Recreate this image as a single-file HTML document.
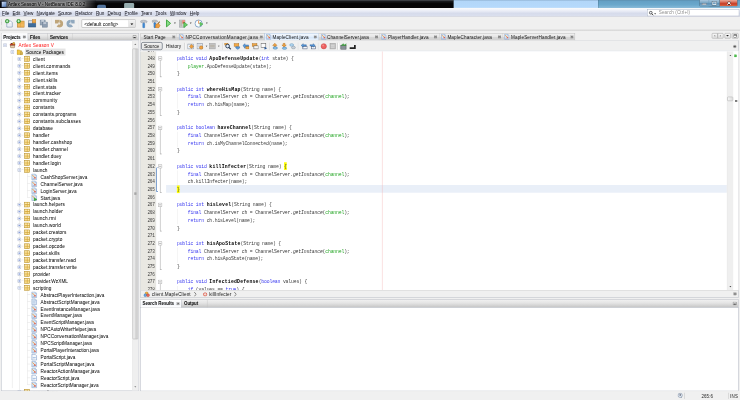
<!DOCTYPE html>
<html lang="en"><head><meta charset="utf-8"><title>Artlex Season V - NetBeans IDE 8.0.2</title>
<style>
html,body{margin:0;padding:0;background:#f0f0f0;overflow:hidden;}
body{width:740px;height:400px;position:relative;}
#w{filter:contrast(1);position:absolute;left:0;top:0;width:1920px;height:1038px;transform:scale(0.385417);transform-origin:0 0;font-family:"Liberation Sans","NanumGothic",sans-serif;font-size:12px;overflow:hidden;background:#f0f0f0;}
.a{position:absolute;box-sizing:border-box;}
.t{white-space:pre;}
.m{font-family:"Liberation Mono","DejaVu Sans Mono",monospace;}
.cl{position:absolute;left:0;height:14px;line-height:14px;white-space:pre;font-family:"Liberation Mono","DejaVu Sans Mono",monospace;font-size:12.4px;letter-spacing:-0.44px;color:#3d3d3d;}
.ln{position:absolute;height:13px;line-height:13px;font-family:"Liberation Mono","DejaVu Sans Mono",monospace;font-size:11.5px;letter-spacing:-0.8px;color:#3c3c3c;text-align:right;}
.k{color:#3c3cf0;} .f{color:#2aa82a;} .b{font-weight:bold;letter-spacing:0.56px;color:#000;} .i{font-style:italic;}
.hl{background:#ffff00;padding:5px 0 1px 0;}
</style></head>
<body><div id="w">
<div class="a " style="left:0.00px;top:0.00px;width:1920.00px;height:20.89px;background:#0a0a0c;"></div>
<div class="a " style="left:0.00px;top:0.00px;width:1176.65px;height:20.89px;background:linear-gradient(#5a5f66 0,#1c1e22 12%,#050506 45%,#060608 100%);"></div>
<div class="a " style="left:1176.65px;top:0.00px;width:374.92px;height:20.89px;background:linear-gradient(#8fb0d0 0,#b2d6f8 14%,#b5d9fb 80%,#c4e0fb 100%);"></div>
<div class="a " style="left:1551.57px;top:0.00px;width:368.43px;height:20.89px;background:linear-gradient(#5c8fb0 0,#64a0c5 18%,#6aa8cc 60%,#8abbd9 100%);"></div>
<div class="a " style="left:251.68px;top:11.68px;width:23.35px;height:9.21px;background:#6d9ad0;opacity:.75;border-radius:4px 4px 0 0;"></div>
<div class="a " style="left:321.73px;top:7.78px;width:25.95px;height:13.10px;background:#b9d6da;opacity:.8;border-radius:3px 3px 0 0;"></div>
<div class="a " style="left:7.78px;top:0.00px;width:241.30px;height:20.89px;background:linear-gradient(90deg,rgba(255,255,255,0) 0,rgba(255,255,255,.42) 6%,rgba(255,255,255,.46) 80%,rgba(255,255,255,.2) 92%,rgba(255,255,255,0) 100%);"></div>
<div class="a " style="left:7.78px;top:0.00px;width:241.30px;height:20.89px;background:linear-gradient(rgba(0,0,0,.25) 0,rgba(0,0,0,0) 30%,rgba(0,0,0,0) 75%,rgba(0,0,0,.35) 100%);"></div>
<div class="a " style="left:3.11px;top:2.59px;width:14.53px;height:16.09px;background:linear-gradient(135deg,#dfe9f6,#7f9fcf 60%,#4a6fae);border-radius:3px;border:1px solid #3d4a66;"></div>
<div class="a t " style="left:20.76px;top:5px;height:14px;line-height:14px;font-size:12px;letter-spacing:-0.059px;color:#000;text-shadow:0 0 5px rgba(255,255,255,.8),0 0 9px rgba(255,255,255,.6);-webkit-text-stroke:.15px #000;">Artlex Season V - NetBeans IDE 8.0.2</div>
<div class="a " style="left:1814.14px;top:0.00px;width:25.43px;height:16.61px;background:linear-gradient(#a9c6dc,#7aa6c4 45%,#5f90b4 55%,#79a8c8);border:1px solid #3f5a6c;border-top:0;border-radius:0 0 0 5px;"></div>
<div class="a " style="left:1839.57px;top:0.00px;width:26.98px;height:16.61px;background:linear-gradient(#a9c6dc,#7aa6c4 45%,#5f90b4 55%,#79a8c8);border:1px solid #3f5a6c;border-top:0;border-left:0;"></div>
<div class="a " style="left:1866.55px;top:0.00px;width:47.74px;height:16.61px;background:linear-gradient(#eaa898,#d4604a 45%,#c2331f 55%,#da6a48);border:1px solid #5a2a22;border-top:0;border-left:0;border-radius:0 0 5px 0;"></div>
<div class="a " style="left:1821.41px;top:8.82px;width:11.42px;height:4.15px;background:#f4f6f8;border:1px solid #4a5a6a;"></div>
<div class="a " style="left:1847.87px;top:4.15px;width:11.42px;height:8.82px;background:#6f9dbe;border:2px solid #f4f6f8;outline:1px solid #4a5a6a;"></div>
<svg class="a" style="left:1884.71px;top:3.11px;" width="12.97" height="10.38" viewBox="0 0 10 8"><path d="M1.500 1l7 6M8.500 1l-7 6" stroke="#4a1a12" stroke-width="3.400"/><path d="M1.500 1l7 6M8.500 1l-7 6" stroke="#fff" stroke-width="2"/></svg>
<div class="a " style="left:0.00px;top:20.89px;width:1920.00px;height:22.44px;background:linear-gradient(#ffffff 0,#f2f4fa 18%,#e1e5f2 50%,#d6dbeb 62%,#dadfee 100%);border-bottom:1px solid #b8bccb;"></div>
<div class="a t " style="left:5.19px;top:28px;height:14px;line-height:14px;font-size:12px;letter-spacing:-0.101px;transform:scaleY(1.08);transform-origin:0 11px;color:#101018;"><u>F</u>ile</div>
<div class="a t " style="left:32.69px;top:28px;height:14px;line-height:14px;font-size:12px;letter-spacing:-0.173px;transform:scaleY(1.08);transform-origin:0 11px;color:#101018;"><u>E</u>dit</div>
<div class="a t " style="left:61.23px;top:28px;height:14px;line-height:14px;font-size:12px;letter-spacing:-0.222px;transform:scaleY(1.08);transform-origin:0 11px;color:#101018;"><u>V</u>iew</div>
<div class="a t " style="left:94.96px;top:28px;height:14px;line-height:14px;font-size:12px;letter-spacing:-0.017px;transform:scaleY(1.08);transform-origin:0 11px;color:#101018;"><u>N</u>avigate</div>
<div class="a t " style="left:150.49px;top:28px;height:14px;line-height:14px;font-size:12px;letter-spacing:-0.368px;transform:scaleY(1.08);transform-origin:0 11px;color:#101018;"><u>S</u>ource</div>
<div class="a t " style="left:195.11px;top:28px;height:14px;line-height:14px;font-size:12px;letter-spacing:-0.090px;transform:scaleY(1.08);transform-origin:0 11px;color:#101018;"><u>R</u>efactor</div>
<div class="a t " style="left:249.08px;top:28px;height:14px;line-height:14px;font-size:12px;letter-spacing:-0.247px;transform:scaleY(1.08);transform-origin:0 11px;color:#101018;"><u>R</u>un</div>
<div class="a t " style="left:278.66px;top:28px;height:14px;line-height:14px;font-size:12px;letter-spacing:0.089px;transform:scaleY(1.08);transform-origin:0 11px;color:#101018;"><u>D</u>ebug</div>
<div class="a t " style="left:323.29px;top:28px;height:14px;line-height:14px;font-size:12px;letter-spacing:0.033px;transform:scaleY(1.08);transform-origin:0 11px;color:#101018;"><u>P</u>rofile</div>
<div class="a t " style="left:365.84px;top:28px;height:14px;line-height:14px;font-size:12px;letter-spacing:-0.071px;transform:scaleY(1.08);transform-origin:0 11px;color:#101018;"><u>T</u>eam</div>
<div class="a t " style="left:403.20px;top:28px;height:14px;line-height:14px;font-size:12px;letter-spacing:0.313px;transform:scaleY(1.08);transform-origin:0 11px;color:#101018;"><u>T</u>ools</div>
<div class="a t " style="left:441.08px;top:28px;height:14px;line-height:14px;font-size:12px;letter-spacing:-0.023px;transform:scaleY(1.08);transform-origin:0 11px;color:#101018;"><u>W</u>indow</div>
<div class="a t " style="left:492.45px;top:28px;height:14px;line-height:14px;font-size:12px;letter-spacing:0.055px;transform:scaleY(1.08);transform-origin:0 11px;color:#101018;"><u>H</u>elp</div>
<div class="a " style="left:1678.70px;top:23.87px;width:239.48px;height:18.16px;background:#fff;border:1px solid #8e9bb5;"></div>
<div class="a t " style="left:1709.32px;top:25px;height:14px;line-height:14px;font-size:12px;letter-spacing:0.207px;transform:scaleY(1.1);transform-origin:0 11px;color:#8f8f8f;">Search (Ctrl+I)</div>
<svg class="a" style="left:1683.4px;top:26.5px" width="22" height="16" viewBox="0 0 22 16"><circle cx="5.500" cy="6" r="3.600" fill="#eef2f8" stroke="#333" stroke-width="1.800"/><path d="M8 8.500l4 4" stroke="#333" stroke-width="2.400"/><path d="M14.500 7.500h4.500l-2.250 2.800z" fill="#222"/></svg>
<div class="a " style="left:0.00px;top:43.59px;width:1920.00px;height:38.40px;background:#f0f0f0;"></div>
<div class="a " style="left:0.00px;top:76.28px;width:1920.00px;height:4.67px;background:linear-gradient(#e2e2e2,#d6d6d6);"></div>
<div class="a " style="left:0.00px;top:80.95px;width:1920.00px;height:4.67px;background:#f1f1f1;"></div>
<div class="a " style="left:3.11px;top:49.82px;width:1.82px;height:1.30px;background:#b0b0b0;"></div>
<div class="a " style="left:3.11px;top:52.67px;width:1.82px;height:1.30px;background:#b0b0b0;"></div>
<div class="a " style="left:3.11px;top:55.52px;width:1.82px;height:1.30px;background:#b0b0b0;"></div>
<div class="a " style="left:3.11px;top:58.38px;width:1.82px;height:1.30px;background:#b0b0b0;"></div>
<div class="a " style="left:3.11px;top:61.23px;width:1.82px;height:1.30px;background:#b0b0b0;"></div>
<div class="a " style="left:3.11px;top:64.09px;width:1.82px;height:1.30px;background:#b0b0b0;"></div>
<div class="a " style="left:3.11px;top:66.94px;width:1.82px;height:1.30px;background:#b0b0b0;"></div>
<div class="a " style="left:3.11px;top:69.79px;width:1.82px;height:1.30px;background:#b0b0b0;"></div>
<div class="a " style="left:3.11px;top:72.65px;width:1.82px;height:1.30px;background:#b0b0b0;"></div>
<svg class="a" style="left:12.97px;top:49.30px;" width="20.76" height="23.35" viewBox="0 0 22 24"><path d="M5 5h10l5 5v12H5z" fill="#fbfcfe" stroke="#6a86a8" stroke-width="1.6"/><path d="M7 13h11M7 16h11M7 19h11" stroke="#c9d4e2" stroke-width="1.2"/><circle cx="6" cy="6" r="5.2" fill="#3aa83a" stroke="#1d7a1d" stroke-width="1"/><path d="M6 2.8v6.4M2.8 6h6.4" stroke="#eaffea" stroke-width="2"/></svg>
<svg class="a" style="left:41.51px;top:49.30px;" width="22.31" height="23.35" viewBox="0 0 22 24"><rect x="3" y="6" width="18" height="16" fill="#f2b85a" stroke="#b97a22" stroke-width="1.6"/><path d="M3 11h18M11 6v16" stroke="#d99a3c" stroke-width="1.2"/><circle cx="6" cy="6" r="5.2" fill="#3aa83a" stroke="#1d7a1d" stroke-width="1"/><path d="M6 2.8v6.4M2.8 6h6.4" stroke="#eaffea" stroke-width="2"/></svg>
<svg class="a" style="left:71.61px;top:49.30px;" width="22.83" height="23.35" viewBox="0 0 24 24"><rect x="2" y="5" width="12" height="16" fill="#dfe6ee" stroke="#5b7390" stroke-width="1.4"/><rect x="13" y="2" width="9" height="9" fill="#f0a848" stroke="#b97a22" stroke-width="1.4"/><path d="M2 12h20v10H2z" fill="#3f6d9c" stroke="#2b4f78" stroke-width="1.4"/></svg>
<svg class="a" style="left:102.23px;top:50.34px;" width="22.83" height="22.31" viewBox="0 0 24 24"><rect x="2" y="2" width="14" height="14" fill="#9aa9ba" stroke="#6f8196" stroke-width="1.4"/><rect x="8" y="8" width="14" height="14" fill="#8e9eb2" stroke="#6a7c92" stroke-width="1.4"/><rect x="11" y="8" width="8" height="5" fill="#c3ccd8"/><rect x="5" y="2" width="8" height="5" fill="#c3ccd8"/></svg>
<div class="a " style="left:132.84px;top:49.30px;width:1.30px;height:24.65px;background:#bdbdbd;"></div>
<div class="a " style="left:134.14px;top:49.30px;width:1.04px;height:24.65px;background:#fff;"></div>
<svg class="a" style="left:141.66px;top:50.34px;" width="22.31" height="21.79" viewBox="0 0 24 24"><path d="M13 5.500A7 7 0 1 1 8 17.500" fill="none" stroke="#bfa57a" stroke-width="8.500"/><rect x="0.500" y="1.500" width="12" height="10.500" fill="#bfa57a"/><rect x="9.500" y="9" width="4" height="4.500" fill="#e9e2d4"/></svg>
<svg class="a" style="left:172.28px;top:50.34px;" width="22.31" height="21.79" viewBox="0 0 24 24"><path d="M11 5.500A7 7 0 1 0 16 17.500" fill="none" stroke="#90a8be" stroke-width="8.500"/><rect x="11.500" y="1.500" width="12" height="10.500" fill="#90a8be"/><rect x="10.500" y="9" width="4" height="4.500" fill="#dfe6ec"/></svg>
<div class="a " style="left:202.90px;top:49.30px;width:1.04px;height:24.65px;background:#c8c8c8;"></div>
<div class="a " style="left:203.94px;top:49.30px;width:1.04px;height:24.65px;background:#fff;"></div>
<div class="a " style="left:212.24px;top:50.85px;width:140.11px;height:20.24px;background:#fff;border:1.3px solid #8a8a8a;"></div>
<div class="a " style="left:332.63px;top:52.15px;width:18.42px;height:17.64px;background:linear-gradient(#f2f2f2,#dedede);border-left:1px solid #d0d0d0;"></div>
<svg class="a" style="left:338.34px;top:59.68px;" width="8.30" height="5.19" viewBox="0 0 8 5"><path d="M0 0h8L4 5z" fill="#111"/></svg>
<div class="a t " style="left:218.46px;top:56px;height:14px;line-height:14px;font-size:12.5px;letter-spacing:-0.014px;transform:scaleY(1.12);transform-origin:0 11px;color:#000;">&lt;default config&gt;</div>
<svg class="a" style="left:363.24px;top:49.82px;" width="20.76" height="23.87" viewBox="0 0 22 24"><path d="M2 4c3-3 14-3 18 1l-2 4c-2-2-4-2-6-2v3H8V7C6 7 4 8 3 9z" fill="#c6cad0" stroke="#858c96" stroke-width="1.2"/><rect x="8" y="10" width="5" height="13" rx="1.5" fill="#3f8fdc" stroke="#1f5fa8" stroke-width="1.2"/></svg>
<svg class="a" style="left:392.82px;top:49.82px;" width="24.91" height="23.87" viewBox="0 0 24 24"><path d="M1 4c3-3 12-3 15 1l-2 3c-2-2-3-2-5-2v3H6V6C4 6 3 7 2 8z" fill="#c6cad0" stroke="#858c96" stroke-width="1.2"/><rect x="6" y="9" width="4.5" height="13" rx="1.5" fill="#3f8fdc" stroke="#1f5fa8" stroke-width="1.2"/><path d="M20 5l2 2-5 6-2-2z" fill="#8a6a3a"/><path d="M11 13l7-2 4 5-4 7-8-1z" fill="#f0a040" stroke="#b86a18" stroke-width="1.2"/></svg>
<svg class="a" style="left:429.66px;top:50.34px;" width="14.53" height="21.28" viewBox="0 0 14 22"><path d="M1.500 1.500L12.500 11 1.500 20.500z" fill="#86dc86" stroke="#2f9e2f" stroke-width="2.200" stroke-linejoin="round"/></svg>
<svg class="a" style="left:451.20px;top:58.12px;" width="5.71" height="3.89" viewBox="0 0 8 5"><path d="M0 0h8L4 5z" fill="#222"/></svg>
<svg class="a" style="left:463.91px;top:50.34px;" width="24.39" height="22.31" viewBox="0 0 26 24"><rect x="2" y="2" width="15" height="20" fill="#d2d2cc" stroke="#8a8f98" stroke-width="1.400"/><rect x="4" y="4" width="5" height="16" fill="#b9b9b0"/><rect x="10" y="3" width="7" height="9" fill="#e8564a"/><rect x="10" y="3" width="7" height="4" fill="#f2a49c"/><path d="M14 8l10 7.500L14 23z" fill="#6cd06c" stroke="#2f9e2f" stroke-width="1.800" stroke-linejoin="round"/></svg>
<svg class="a" style="left:492.45px;top:58.12px;" width="5.71" height="3.89" viewBox="0 0 8 5"><path d="M0 0h8L4 5z" fill="#222"/></svg>
<svg class="a" style="left:504.13px;top:50.34px;" width="23.61" height="22.31" viewBox="0 0 24 24"><circle cx="11.500" cy="12" r="10" fill="#fbfdff" stroke="#7a9cc0" stroke-width="2.400"/><path d="M11.500 3.500v8.500" stroke="#f07a28" stroke-width="2.200"/><path d="M11.500 12h5" stroke="#556" stroke-width="1.200"/><path d="M15.500 8.500l8 5-8 5z" fill="#6cd06c" stroke="#2f9e2f" stroke-width="1.300" stroke-linejoin="round"/></svg>
<svg class="a" style="left:533.71px;top:58.12px;" width="5.71" height="3.89" viewBox="0 0 8 5"><path d="M0 0h8L4 5z" fill="#222"/></svg>
<div class="a " style="left:3.11px;top:85.62px;width:356.50px;height:19.20px;background:linear-gradient(#f0f0f0 0,#e4e4e4 40%,#d2d2d2 75%,#c2c2c2 100%);border:1px solid #a9adb6;border-bottom:0;"></div>
<div class="a " style="left:3.11px;top:104.30px;width:356.50px;height:910.96px;background:#fff;border:1px solid #a0a6b4;"></div>
<div class="a " style="left:4.15px;top:86.40px;width:68.50px;height:18.68px;background:linear-gradient(#ffffff,#f5f7fb 60%,#ffffff);border-right:1px solid #b4b8c2;"></div>
<div class="a " style="left:72.65px;top:86.40px;width:50.85px;height:17.90px;border-right:1px solid #bcbcbc;"></div>
<div class="a " style="left:123.50px;top:86.40px;width:64.61px;height:17.90px;border-right:1px solid #c4c4c4;"></div>
<div class="a t " style="left:8.30px;top:90px;height:14px;line-height:14px;font-size:12px;font-weight:bold;letter-spacing:-0.340px;transform:scaleY(1.08);transform-origin:0 11px;color:#111;-webkit-text-stroke:.1px #111;">Projects</div>
<svg class="a" style="left:59.16px;top:91.85px;" width="8.30" height="7.78" viewBox="0 0 8 8"><rect x=".5" y=".5" width="7" height="7" fill="#d0d0d0" stroke="#6a6a6a"/><path d="M2 2l4 4M6 2L2 6" stroke="#222" stroke-width="1.500"/></svg>
<div class="a t " style="left:77.84px;top:90px;height:14px;line-height:14px;font-size:12px;font-weight:bold;letter-spacing:-0.173px;transform:scaleY(1.08);transform-origin:0 11px;color:#111;-webkit-text-stroke:.1px #111;">Files</div>
<div class="a t " style="left:129.73px;top:90px;height:14px;line-height:14px;font-size:12px;font-weight:bold;letter-spacing:-0.397px;transform:scaleY(1.08);transform-origin:0 11px;color:#111;-webkit-text-stroke:.1px #111;">Services</div>
<svg class="a" style="left:344.04px;top:90.81px;" width="10.38" height="9.34" viewBox="0 0 10 9"><rect x=".7" y=".7" width="8.6" height="7.6" rx="1" fill="#f4f4f4" stroke="#555" stroke-width="1.2"/><rect x="2.2" y="4.6" width="5.6" height="2.6" fill="#333"/></svg>
<div class="a " style="left:31.39px;top:145.30px;width:0.78px;height:861.41px;background:#d9d9d9;"></div>
<div class="a " style="left:50.08px;top:160.86px;width:0.78px;height:853.62px;background:#d9d9d9;"></div>
<div class="a " style="left:69.79px;top:449.76px;width:0.78px;height:63.00px;background:#d9d9d9;"></div>
<div class="a " style="left:70.57px;top:458.37px;width:8.82px;height:0.78px;background:#d9d9d9;"></div>
<div class="a " style="left:70.57px;top:476.37px;width:8.82px;height:0.78px;background:#d9d9d9;"></div>
<div class="a " style="left:70.57px;top:494.37px;width:8.82px;height:0.78px;background:#d9d9d9;"></div>
<div class="a " style="left:70.57px;top:512.37px;width:8.82px;height:0.78px;background:#d9d9d9;"></div>
<div class="a " style="left:69.79px;top:755.76px;width:0.78px;height:243.00px;background:#d9d9d9;"></div>
<div class="a " style="left:70.57px;top:764.37px;width:8.82px;height:0.78px;background:#d9d9d9;"></div>
<div class="a " style="left:70.57px;top:782.37px;width:8.82px;height:0.78px;background:#d9d9d9;"></div>
<div class="a " style="left:70.57px;top:800.37px;width:8.82px;height:0.78px;background:#d9d9d9;"></div>
<div class="a " style="left:70.57px;top:818.37px;width:8.82px;height:0.78px;background:#d9d9d9;"></div>
<div class="a " style="left:70.57px;top:836.37px;width:8.82px;height:0.78px;background:#d9d9d9;"></div>
<div class="a " style="left:70.57px;top:854.37px;width:8.82px;height:0.78px;background:#d9d9d9;"></div>
<div class="a " style="left:70.57px;top:872.37px;width:8.82px;height:0.78px;background:#d9d9d9;"></div>
<div class="a " style="left:70.57px;top:890.37px;width:8.82px;height:0.78px;background:#d9d9d9;"></div>
<div class="a " style="left:70.57px;top:908.37px;width:8.82px;height:0.78px;background:#d9d9d9;"></div>
<div class="a " style="left:70.57px;top:926.37px;width:8.82px;height:0.78px;background:#d9d9d9;"></div>
<div class="a " style="left:70.57px;top:944.37px;width:8.82px;height:0.78px;background:#d9d9d9;"></div>
<div class="a " style="left:70.57px;top:962.37px;width:8.82px;height:0.78px;background:#d9d9d9;"></div>
<div class="a " style="left:70.57px;top:980.37px;width:8.82px;height:0.78px;background:#d9d9d9;"></div>
<div class="a " style="left:70.57px;top:998.37px;width:8.82px;height:0.78px;background:#d9d9d9;"></div>
<div class="a " style="left:55.52px;top:152.37px;width:5.71px;height:0.78px;background:#d9d9d9;"></div>
<div class="a " style="left:55.52px;top:170.37px;width:5.71px;height:0.78px;background:#d9d9d9;"></div>
<div class="a " style="left:55.52px;top:188.37px;width:5.71px;height:0.78px;background:#d9d9d9;"></div>
<div class="a " style="left:55.52px;top:206.37px;width:5.71px;height:0.78px;background:#d9d9d9;"></div>
<div class="a " style="left:55.52px;top:224.37px;width:5.71px;height:0.78px;background:#d9d9d9;"></div>
<div class="a " style="left:55.52px;top:242.37px;width:5.71px;height:0.78px;background:#d9d9d9;"></div>
<div class="a " style="left:55.52px;top:260.37px;width:5.71px;height:0.78px;background:#d9d9d9;"></div>
<div class="a " style="left:55.52px;top:278.37px;width:5.71px;height:0.78px;background:#d9d9d9;"></div>
<div class="a " style="left:55.52px;top:296.37px;width:5.71px;height:0.78px;background:#d9d9d9;"></div>
<div class="a " style="left:55.52px;top:314.37px;width:5.71px;height:0.78px;background:#d9d9d9;"></div>
<div class="a " style="left:55.52px;top:332.37px;width:5.71px;height:0.78px;background:#d9d9d9;"></div>
<div class="a " style="left:55.52px;top:350.37px;width:5.71px;height:0.78px;background:#d9d9d9;"></div>
<div class="a " style="left:55.52px;top:368.37px;width:5.71px;height:0.78px;background:#d9d9d9;"></div>
<div class="a " style="left:55.52px;top:386.37px;width:5.71px;height:0.78px;background:#d9d9d9;"></div>
<div class="a " style="left:55.52px;top:404.37px;width:5.71px;height:0.78px;background:#d9d9d9;"></div>
<div class="a " style="left:55.52px;top:422.37px;width:5.71px;height:0.78px;background:#d9d9d9;"></div>
<div class="a " style="left:55.52px;top:440.37px;width:5.71px;height:0.78px;background:#d9d9d9;"></div>
<div class="a " style="left:55.52px;top:530.37px;width:5.71px;height:0.78px;background:#d9d9d9;"></div>
<div class="a " style="left:55.52px;top:548.37px;width:5.71px;height:0.78px;background:#d9d9d9;"></div>
<div class="a " style="left:55.52px;top:566.37px;width:5.71px;height:0.78px;background:#d9d9d9;"></div>
<div class="a " style="left:55.52px;top:584.37px;width:5.71px;height:0.78px;background:#d9d9d9;"></div>
<div class="a " style="left:55.52px;top:602.37px;width:5.71px;height:0.78px;background:#d9d9d9;"></div>
<div class="a " style="left:55.52px;top:620.37px;width:5.71px;height:0.78px;background:#d9d9d9;"></div>
<div class="a " style="left:55.52px;top:638.37px;width:5.71px;height:0.78px;background:#d9d9d9;"></div>
<div class="a " style="left:55.52px;top:656.37px;width:5.71px;height:0.78px;background:#d9d9d9;"></div>
<div class="a " style="left:55.52px;top:674.37px;width:5.71px;height:0.78px;background:#d9d9d9;"></div>
<div class="a " style="left:55.52px;top:692.37px;width:5.71px;height:0.78px;background:#d9d9d9;"></div>
<div class="a " style="left:55.52px;top:710.37px;width:5.71px;height:0.78px;background:#d9d9d9;"></div>
<div class="a " style="left:55.52px;top:728.37px;width:5.71px;height:0.78px;background:#d9d9d9;"></div>
<div class="a " style="left:55.52px;top:746.37px;width:5.71px;height:0.78px;background:#d9d9d9;"></div>
<div class="a " style="left:55.52px;top:1016.37px;width:5.71px;height:0.78px;background:#d9d9d9;"></div>
<svg class="a" style="left:8.49px;top:111.76px" width="10" height="10" viewBox="0 0 10 10"><rect x=".6" y=".6" width="8.8" height="8.8" rx="2.4" fill="#f4f6fb" stroke="#8f9bb3" stroke-width="1.1"/><path d="M3 5h4" stroke="#3f62c4" stroke-width="1.1"/></svg>
<svg class="a" style="left:23.87px;top:107.94px;" width="17.12" height="17.64" viewBox="0 0 16 16"><path d="M2 7c0-4 12-4 12 0v2H2z" fill="#d04a2a" stroke="#7a2a1a" stroke-width="1"/><rect x="3" y="9" width="10" height="6" rx="2" fill="#e8d0b0" stroke="#6a4a2a" stroke-width="1"/><circle cx="11" cy="4" r="2.5" fill="#f0c040" stroke="#7a5a1a" stroke-width=".8"/><path d="M4 3l3 3" stroke="#222" stroke-width="1.4"/></svg>
<div class="a t " style="left:48.26px;top:111px;height:14px;line-height:14px;font-size:12.2px;letter-spacing:0.296px;transform:scaleY(1.12);transform-origin:0 11px;color:#ff2a2a;-webkit-text-stroke:.08px #ff2a2a;">Artlex Season V</div>
<div class="a " style="left:64.86px;top:125.94px;width:105.34px;height:17.90px;background:#e4e4e4;"></div>
<svg class="a" style="left:26.65px;top:129.76px" width="10" height="10" viewBox="0 0 10 10"><rect x=".6" y=".6" width="8.8" height="8.8" rx="2.4" fill="#f4f6fb" stroke="#8f9bb3" stroke-width="1.1"/><path d="M3 5h4" stroke="#3f62c4" stroke-width="1.1"/></svg>
<svg class="a" style="left:43.07px;top:125.94px;" width="17.12" height="17.64" viewBox="0 0 16 16"><path d="M1 3h6l1.5 2H12v9H1z" fill="#f2c744" stroke="#a8811c" stroke-width="1"/><rect x="9" y="8" width="6" height="7" fill="#f7e08c" stroke="#a8811c" stroke-width="1"/><path d="M9 11.5h6M12 8v7" stroke="#a8811c" stroke-width=".8"/></svg>
<div class="a t " style="left:67.46px;top:129px;height:14px;line-height:14px;font-size:12.2px;letter-spacing:0.203px;transform:scaleY(1.12);transform-origin:0 11px;color:#111;-webkit-text-stroke:.08px #111;">Source Packages</div>
<svg class="a" style="left:45.34px;top:147.76px" width="10" height="10" viewBox="0 0 10 10"><rect x=".6" y=".6" width="8.8" height="8.8" rx="2.4" fill="#f4f6fb" stroke="#8f9bb3" stroke-width="1.1"/><path d="M3 5h4" stroke="#3f62c4" stroke-width="1.1"/><path d="M5 3v4" stroke="#3f62c4" stroke-width="1.1"/></svg>
<svg class="a" style="left:61.75px;top:143.94px;" width="17.12" height="17.64" viewBox="0 0 16 16"><rect x="2" y="2.200" width="12" height="11.600" fill="#f3cf6e" stroke="#b48c24" stroke-width="1.300"/><path d="M2 8h12M8 2.200v11.600" stroke="#c59a30" stroke-width="1.200"/><rect x="3.400" y="3.600" width="3.400" height="3" fill="#fdf0c4"/><rect x="9.400" y="3.600" width="3.400" height="3" fill="#fdf0c4"/><rect x="3.400" y="9.400" width="3.400" height="3" fill="#f9e29a"/><rect x="9.400" y="9.400" width="3.400" height="3" fill="#f9e29a"/></svg>
<div class="a t " style="left:85.62px;top:147px;height:14px;line-height:14px;font-size:12.2px;letter-spacing:0.447px;transform:scaleY(1.12);transform-origin:0 11px;color:#111;-webkit-text-stroke:.08px #111;">client</div>
<svg class="a" style="left:45.34px;top:165.76px" width="10" height="10" viewBox="0 0 10 10"><rect x=".6" y=".6" width="8.8" height="8.8" rx="2.4" fill="#f4f6fb" stroke="#8f9bb3" stroke-width="1.1"/><path d="M3 5h4" stroke="#3f62c4" stroke-width="1.1"/><path d="M5 3v4" stroke="#3f62c4" stroke-width="1.1"/></svg>
<svg class="a" style="left:61.75px;top:161.94px;" width="17.12" height="17.64" viewBox="0 0 16 16"><rect x="2" y="2.200" width="12" height="11.600" fill="#f3cf6e" stroke="#b48c24" stroke-width="1.300"/><path d="M2 8h12M8 2.200v11.600" stroke="#c59a30" stroke-width="1.200"/><rect x="3.400" y="3.600" width="3.400" height="3" fill="#fdf0c4"/><rect x="9.400" y="3.600" width="3.400" height="3" fill="#fdf0c4"/><rect x="3.400" y="9.400" width="3.400" height="3" fill="#f9e29a"/><rect x="9.400" y="9.400" width="3.400" height="3" fill="#f9e29a"/></svg>
<div class="a t " style="left:85.62px;top:165px;height:14px;line-height:14px;font-size:12.2px;letter-spacing:0.406px;transform:scaleY(1.12);transform-origin:0 11px;color:#111;-webkit-text-stroke:.08px #111;">client.commands</div>
<svg class="a" style="left:45.34px;top:183.76px" width="10" height="10" viewBox="0 0 10 10"><rect x=".6" y=".6" width="8.8" height="8.8" rx="2.4" fill="#f4f6fb" stroke="#8f9bb3" stroke-width="1.1"/><path d="M3 5h4" stroke="#3f62c4" stroke-width="1.1"/><path d="M5 3v4" stroke="#3f62c4" stroke-width="1.1"/></svg>
<svg class="a" style="left:61.75px;top:179.94px;" width="17.12" height="17.64" viewBox="0 0 16 16"><rect x="2" y="2.200" width="12" height="11.600" fill="#f3cf6e" stroke="#b48c24" stroke-width="1.300"/><path d="M2 8h12M8 2.200v11.600" stroke="#c59a30" stroke-width="1.200"/><rect x="3.400" y="3.600" width="3.400" height="3" fill="#fdf0c4"/><rect x="9.400" y="3.600" width="3.400" height="3" fill="#fdf0c4"/><rect x="3.400" y="9.400" width="3.400" height="3" fill="#f9e29a"/><rect x="9.400" y="9.400" width="3.400" height="3" fill="#f9e29a"/></svg>
<div class="a t " style="left:85.62px;top:184px;height:14px;line-height:14px;font-size:12.2px;letter-spacing:0.325px;transform:scaleY(1.12);transform-origin:0 11px;color:#111;-webkit-text-stroke:.08px #111;">client.items</div>
<svg class="a" style="left:45.34px;top:201.76px" width="10" height="10" viewBox="0 0 10 10"><rect x=".6" y=".6" width="8.8" height="8.8" rx="2.4" fill="#f4f6fb" stroke="#8f9bb3" stroke-width="1.1"/><path d="M3 5h4" stroke="#3f62c4" stroke-width="1.1"/><path d="M5 3v4" stroke="#3f62c4" stroke-width="1.1"/></svg>
<svg class="a" style="left:61.75px;top:197.94px;" width="17.12" height="17.64" viewBox="0 0 16 16"><rect x="2" y="2.200" width="12" height="11.600" fill="#f3cf6e" stroke="#b48c24" stroke-width="1.300"/><path d="M2 8h12M8 2.200v11.600" stroke="#c59a30" stroke-width="1.200"/><rect x="3.400" y="3.600" width="3.400" height="3" fill="#fdf0c4"/><rect x="9.400" y="3.600" width="3.400" height="3" fill="#fdf0c4"/><rect x="3.400" y="9.400" width="3.400" height="3" fill="#f9e29a"/><rect x="9.400" y="9.400" width="3.400" height="3" fill="#f9e29a"/></svg>
<div class="a t " style="left:85.62px;top:202px;height:14px;line-height:14px;font-size:12.2px;letter-spacing:0.390px;transform:scaleY(1.12);transform-origin:0 11px;color:#111;-webkit-text-stroke:.08px #111;">client.skills</div>
<svg class="a" style="left:45.34px;top:219.76px" width="10" height="10" viewBox="0 0 10 10"><rect x=".6" y=".6" width="8.8" height="8.8" rx="2.4" fill="#f4f6fb" stroke="#8f9bb3" stroke-width="1.1"/><path d="M3 5h4" stroke="#3f62c4" stroke-width="1.1"/><path d="M5 3v4" stroke="#3f62c4" stroke-width="1.1"/></svg>
<svg class="a" style="left:61.75px;top:215.94px;" width="17.12" height="17.64" viewBox="0 0 16 16"><rect x="2" y="2.200" width="12" height="11.600" fill="#f3cf6e" stroke="#b48c24" stroke-width="1.300"/><path d="M2 8h12M8 2.200v11.600" stroke="#c59a30" stroke-width="1.200"/><rect x="3.400" y="3.600" width="3.400" height="3" fill="#fdf0c4"/><rect x="9.400" y="3.600" width="3.400" height="3" fill="#fdf0c4"/><rect x="3.400" y="9.400" width="3.400" height="3" fill="#f9e29a"/><rect x="9.400" y="9.400" width="3.400" height="3" fill="#f9e29a"/></svg>
<div class="a t " style="left:85.62px;top:220px;height:14px;line-height:14px;font-size:12.2px;letter-spacing:0.303px;transform:scaleY(1.12);transform-origin:0 11px;color:#111;-webkit-text-stroke:.08px #111;">client.stats</div>
<svg class="a" style="left:45.34px;top:237.76px" width="10" height="10" viewBox="0 0 10 10"><rect x=".6" y=".6" width="8.8" height="8.8" rx="2.4" fill="#f4f6fb" stroke="#8f9bb3" stroke-width="1.1"/><path d="M3 5h4" stroke="#3f62c4" stroke-width="1.1"/><path d="M5 3v4" stroke="#3f62c4" stroke-width="1.1"/></svg>
<svg class="a" style="left:61.75px;top:233.94px;" width="17.12" height="17.64" viewBox="0 0 16 16"><rect x="2" y="2.200" width="12" height="11.600" fill="#f3cf6e" stroke="#b48c24" stroke-width="1.300"/><path d="M2 8h12M8 2.200v11.600" stroke="#c59a30" stroke-width="1.200"/><rect x="3.400" y="3.600" width="3.400" height="3" fill="#fdf0c4"/><rect x="9.400" y="3.600" width="3.400" height="3" fill="#fdf0c4"/><rect x="3.400" y="9.400" width="3.400" height="3" fill="#f9e29a"/><rect x="9.400" y="9.400" width="3.400" height="3" fill="#f9e29a"/></svg>
<div class="a t " style="left:85.62px;top:235px;height:14px;line-height:14px;font-size:12.2px;letter-spacing:0.253px;transform:scaleY(1.12);transform-origin:0 11px;color:#111;-webkit-text-stroke:.08px #111;">client.tracker</div>
<svg class="a" style="left:45.34px;top:255.76px" width="10" height="10" viewBox="0 0 10 10"><rect x=".6" y=".6" width="8.8" height="8.8" rx="2.4" fill="#f4f6fb" stroke="#8f9bb3" stroke-width="1.1"/><path d="M3 5h4" stroke="#3f62c4" stroke-width="1.1"/><path d="M5 3v4" stroke="#3f62c4" stroke-width="1.1"/></svg>
<svg class="a" style="left:61.75px;top:251.94px;" width="17.12" height="17.64" viewBox="0 0 16 16"><rect x="2" y="2.200" width="12" height="11.600" fill="#f3cf6e" stroke="#b48c24" stroke-width="1.300"/><path d="M2 8h12M8 2.200v11.600" stroke="#c59a30" stroke-width="1.200"/><rect x="3.400" y="3.600" width="3.400" height="3" fill="#fdf0c4"/><rect x="9.400" y="3.600" width="3.400" height="3" fill="#fdf0c4"/><rect x="3.400" y="9.400" width="3.400" height="3" fill="#f9e29a"/><rect x="9.400" y="9.400" width="3.400" height="3" fill="#f9e29a"/></svg>
<div class="a t " style="left:85.62px;top:254px;height:14px;line-height:14px;font-size:12.2px;letter-spacing:0.543px;transform:scaleY(1.12);transform-origin:0 11px;color:#111;-webkit-text-stroke:.08px #111;">community</div>
<svg class="a" style="left:45.34px;top:273.76px" width="10" height="10" viewBox="0 0 10 10"><rect x=".6" y=".6" width="8.8" height="8.8" rx="2.4" fill="#f4f6fb" stroke="#8f9bb3" stroke-width="1.1"/><path d="M3 5h4" stroke="#3f62c4" stroke-width="1.1"/><path d="M5 3v4" stroke="#3f62c4" stroke-width="1.1"/></svg>
<svg class="a" style="left:61.75px;top:269.94px;" width="17.12" height="17.64" viewBox="0 0 16 16"><rect x="2" y="2.200" width="12" height="11.600" fill="#f3cf6e" stroke="#b48c24" stroke-width="1.300"/><path d="M2 8h12M8 2.200v11.600" stroke="#c59a30" stroke-width="1.200"/><rect x="3.400" y="3.600" width="3.400" height="3" fill="#fdf0c4"/><rect x="9.400" y="3.600" width="3.400" height="3" fill="#fdf0c4"/><rect x="3.400" y="9.400" width="3.400" height="3" fill="#f9e29a"/><rect x="9.400" y="9.400" width="3.400" height="3" fill="#f9e29a"/></svg>
<div class="a t " style="left:85.62px;top:272px;height:14px;line-height:14px;font-size:12.2px;letter-spacing:0.371px;transform:scaleY(1.12);transform-origin:0 11px;color:#111;-webkit-text-stroke:.08px #111;">constants</div>
<svg class="a" style="left:45.34px;top:291.76px" width="10" height="10" viewBox="0 0 10 10"><rect x=".6" y=".6" width="8.8" height="8.8" rx="2.4" fill="#f4f6fb" stroke="#8f9bb3" stroke-width="1.1"/><path d="M3 5h4" stroke="#3f62c4" stroke-width="1.1"/><path d="M5 3v4" stroke="#3f62c4" stroke-width="1.1"/></svg>
<svg class="a" style="left:61.75px;top:287.94px;" width="17.12" height="17.64" viewBox="0 0 16 16"><rect x="2" y="2.200" width="12" height="11.600" fill="#f3cf6e" stroke="#b48c24" stroke-width="1.300"/><path d="M2 8h12M8 2.200v11.600" stroke="#c59a30" stroke-width="1.200"/><rect x="3.400" y="3.600" width="3.400" height="3" fill="#fdf0c4"/><rect x="9.400" y="3.600" width="3.400" height="3" fill="#fdf0c4"/><rect x="3.400" y="9.400" width="3.400" height="3" fill="#f9e29a"/><rect x="9.400" y="9.400" width="3.400" height="3" fill="#f9e29a"/></svg>
<div class="a t " style="left:85.62px;top:290px;height:14px;line-height:14px;font-size:12.2px;letter-spacing:0.307px;transform:scaleY(1.12);transform-origin:0 11px;color:#111;-webkit-text-stroke:.08px #111;">constants.programs</div>
<svg class="a" style="left:45.34px;top:309.76px" width="10" height="10" viewBox="0 0 10 10"><rect x=".6" y=".6" width="8.8" height="8.8" rx="2.4" fill="#f4f6fb" stroke="#8f9bb3" stroke-width="1.1"/><path d="M3 5h4" stroke="#3f62c4" stroke-width="1.1"/><path d="M5 3v4" stroke="#3f62c4" stroke-width="1.1"/></svg>
<svg class="a" style="left:61.75px;top:305.94px;" width="17.12" height="17.64" viewBox="0 0 16 16"><rect x="2" y="2.200" width="12" height="11.600" fill="#f3cf6e" stroke="#b48c24" stroke-width="1.300"/><path d="M2 8h12M8 2.200v11.600" stroke="#c59a30" stroke-width="1.200"/><rect x="3.400" y="3.600" width="3.400" height="3" fill="#fdf0c4"/><rect x="9.400" y="3.600" width="3.400" height="3" fill="#fdf0c4"/><rect x="3.400" y="9.400" width="3.400" height="3" fill="#f9e29a"/><rect x="9.400" y="9.400" width="3.400" height="3" fill="#f9e29a"/></svg>
<div class="a t " style="left:85.62px;top:308px;height:14px;line-height:14px;font-size:12.2px;letter-spacing:0.433px;transform:scaleY(1.12);transform-origin:0 11px;color:#111;-webkit-text-stroke:.08px #111;">constants.subclasses</div>
<svg class="a" style="left:45.34px;top:327.76px" width="10" height="10" viewBox="0 0 10 10"><rect x=".6" y=".6" width="8.8" height="8.8" rx="2.4" fill="#f4f6fb" stroke="#8f9bb3" stroke-width="1.1"/><path d="M3 5h4" stroke="#3f62c4" stroke-width="1.1"/><path d="M5 3v4" stroke="#3f62c4" stroke-width="1.1"/></svg>
<svg class="a" style="left:61.75px;top:323.94px;" width="17.12" height="17.64" viewBox="0 0 16 16"><rect x="2" y="2.200" width="12" height="11.600" fill="#f3cf6e" stroke="#b48c24" stroke-width="1.300"/><path d="M2 8h12M8 2.200v11.600" stroke="#c59a30" stroke-width="1.200"/><rect x="3.400" y="3.600" width="3.400" height="3" fill="#fdf0c4"/><rect x="9.400" y="3.600" width="3.400" height="3" fill="#fdf0c4"/><rect x="3.400" y="9.400" width="3.400" height="3" fill="#f9e29a"/><rect x="9.400" y="9.400" width="3.400" height="3" fill="#f9e29a"/></svg>
<div class="a t " style="left:85.62px;top:326px;height:14px;line-height:14px;font-size:12.2px;letter-spacing:0.215px;transform:scaleY(1.12);transform-origin:0 11px;color:#111;-webkit-text-stroke:.08px #111;">database</div>
<svg class="a" style="left:45.34px;top:345.76px" width="10" height="10" viewBox="0 0 10 10"><rect x=".6" y=".6" width="8.8" height="8.8" rx="2.4" fill="#f4f6fb" stroke="#8f9bb3" stroke-width="1.1"/><path d="M3 5h4" stroke="#3f62c4" stroke-width="1.1"/><path d="M5 3v4" stroke="#3f62c4" stroke-width="1.1"/></svg>
<svg class="a" style="left:61.75px;top:341.94px;" width="17.12" height="17.64" viewBox="0 0 16 16"><rect x="2" y="2.200" width="12" height="11.600" fill="#f3cf6e" stroke="#b48c24" stroke-width="1.300"/><path d="M2 8h12M8 2.200v11.600" stroke="#c59a30" stroke-width="1.200"/><rect x="3.400" y="3.600" width="3.400" height="3" fill="#fdf0c4"/><rect x="9.400" y="3.600" width="3.400" height="3" fill="#fdf0c4"/><rect x="3.400" y="9.400" width="3.400" height="3" fill="#f9e29a"/><rect x="9.400" y="9.400" width="3.400" height="3" fill="#f9e29a"/></svg>
<div class="a t " style="left:85.62px;top:344px;height:14px;line-height:14px;font-size:12.2px;letter-spacing:0.268px;transform:scaleY(1.12);transform-origin:0 11px;color:#111;-webkit-text-stroke:.08px #111;">handler</div>
<svg class="a" style="left:45.34px;top:363.76px" width="10" height="10" viewBox="0 0 10 10"><rect x=".6" y=".6" width="8.8" height="8.8" rx="2.4" fill="#f4f6fb" stroke="#8f9bb3" stroke-width="1.1"/><path d="M3 5h4" stroke="#3f62c4" stroke-width="1.1"/><path d="M5 3v4" stroke="#3f62c4" stroke-width="1.1"/></svg>
<svg class="a" style="left:61.75px;top:359.94px;" width="17.12" height="17.64" viewBox="0 0 16 16"><rect x="2" y="2.200" width="12" height="11.600" fill="#f3cf6e" stroke="#b48c24" stroke-width="1.300"/><path d="M2 8h12M8 2.200v11.600" stroke="#c59a30" stroke-width="1.200"/><rect x="3.400" y="3.600" width="3.400" height="3" fill="#fdf0c4"/><rect x="9.400" y="3.600" width="3.400" height="3" fill="#fdf0c4"/><rect x="3.400" y="9.400" width="3.400" height="3" fill="#f9e29a"/><rect x="9.400" y="9.400" width="3.400" height="3" fill="#f9e29a"/></svg>
<div class="a t " style="left:85.62px;top:363px;height:14px;line-height:14px;font-size:12.2px;letter-spacing:0.416px;transform:scaleY(1.12);transform-origin:0 11px;color:#111;-webkit-text-stroke:.08px #111;">handler.cashshop</div>
<svg class="a" style="left:45.34px;top:381.76px" width="10" height="10" viewBox="0 0 10 10"><rect x=".6" y=".6" width="8.8" height="8.8" rx="2.4" fill="#f4f6fb" stroke="#8f9bb3" stroke-width="1.1"/><path d="M3 5h4" stroke="#3f62c4" stroke-width="1.1"/><path d="M5 3v4" stroke="#3f62c4" stroke-width="1.1"/></svg>
<svg class="a" style="left:61.75px;top:377.94px;" width="17.12" height="17.64" viewBox="0 0 16 16"><rect x="2" y="2.200" width="12" height="11.600" fill="#f3cf6e" stroke="#b48c24" stroke-width="1.300"/><path d="M2 8h12M8 2.200v11.600" stroke="#c59a30" stroke-width="1.200"/><rect x="3.400" y="3.600" width="3.400" height="3" fill="#fdf0c4"/><rect x="9.400" y="3.600" width="3.400" height="3" fill="#fdf0c4"/><rect x="3.400" y="9.400" width="3.400" height="3" fill="#f9e29a"/><rect x="9.400" y="9.400" width="3.400" height="3" fill="#f9e29a"/></svg>
<div class="a t " style="left:85.62px;top:381px;height:14px;line-height:14px;font-size:12.2px;letter-spacing:0.314px;transform:scaleY(1.12);transform-origin:0 11px;color:#111;-webkit-text-stroke:.08px #111;">handler.channel</div>
<svg class="a" style="left:45.34px;top:399.76px" width="10" height="10" viewBox="0 0 10 10"><rect x=".6" y=".6" width="8.8" height="8.8" rx="2.4" fill="#f4f6fb" stroke="#8f9bb3" stroke-width="1.1"/><path d="M3 5h4" stroke="#3f62c4" stroke-width="1.1"/><path d="M5 3v4" stroke="#3f62c4" stroke-width="1.1"/></svg>
<svg class="a" style="left:61.75px;top:395.94px;" width="17.12" height="17.64" viewBox="0 0 16 16"><rect x="2" y="2.200" width="12" height="11.600" fill="#f3cf6e" stroke="#b48c24" stroke-width="1.300"/><path d="M2 8h12M8 2.200v11.600" stroke="#c59a30" stroke-width="1.200"/><rect x="3.400" y="3.600" width="3.400" height="3" fill="#fdf0c4"/><rect x="9.400" y="3.600" width="3.400" height="3" fill="#fdf0c4"/><rect x="3.400" y="9.400" width="3.400" height="3" fill="#f9e29a"/><rect x="9.400" y="9.400" width="3.400" height="3" fill="#f9e29a"/></svg>
<div class="a t " style="left:85.62px;top:399px;height:14px;line-height:14px;font-size:12.2px;letter-spacing:0.322px;transform:scaleY(1.12);transform-origin:0 11px;color:#111;-webkit-text-stroke:.08px #111;">handler.duey</div>
<svg class="a" style="left:45.34px;top:417.76px" width="10" height="10" viewBox="0 0 10 10"><rect x=".6" y=".6" width="8.8" height="8.8" rx="2.4" fill="#f4f6fb" stroke="#8f9bb3" stroke-width="1.1"/><path d="M3 5h4" stroke="#3f62c4" stroke-width="1.1"/><path d="M5 3v4" stroke="#3f62c4" stroke-width="1.1"/></svg>
<svg class="a" style="left:61.75px;top:413.94px;" width="17.12" height="17.64" viewBox="0 0 16 16"><rect x="2" y="2.200" width="12" height="11.600" fill="#f3cf6e" stroke="#b48c24" stroke-width="1.300"/><path d="M2 8h12M8 2.200v11.600" stroke="#c59a30" stroke-width="1.200"/><rect x="3.400" y="3.600" width="3.400" height="3" fill="#fdf0c4"/><rect x="9.400" y="3.600" width="3.400" height="3" fill="#fdf0c4"/><rect x="3.400" y="9.400" width="3.400" height="3" fill="#f9e29a"/><rect x="9.400" y="9.400" width="3.400" height="3" fill="#f9e29a"/></svg>
<div class="a t " style="left:85.62px;top:417px;height:14px;line-height:14px;font-size:12.2px;letter-spacing:0.270px;transform:scaleY(1.12);transform-origin:0 11px;color:#111;-webkit-text-stroke:.08px #111;">handler.login</div>
<svg class="a" style="left:45.34px;top:435.76px" width="10" height="10" viewBox="0 0 10 10"><rect x=".6" y=".6" width="8.8" height="8.8" rx="2.4" fill="#f4f6fb" stroke="#8f9bb3" stroke-width="1.1"/><path d="M3 5h4" stroke="#3f62c4" stroke-width="1.1"/></svg>
<svg class="a" style="left:61.75px;top:431.94px;" width="17.12" height="17.64" viewBox="0 0 16 16"><rect x="2" y="2.200" width="12" height="11.600" fill="#f3cf6e" stroke="#b48c24" stroke-width="1.300"/><path d="M2 8h12M8 2.200v11.600" stroke="#c59a30" stroke-width="1.200"/><rect x="3.400" y="3.600" width="3.400" height="3" fill="#fdf0c4"/><rect x="9.400" y="3.600" width="3.400" height="3" fill="#fdf0c4"/><rect x="3.400" y="9.400" width="3.400" height="3" fill="#f9e29a"/><rect x="9.400" y="9.400" width="3.400" height="3" fill="#f9e29a"/></svg>
<div class="a t " style="left:85.62px;top:435px;height:14px;line-height:14px;font-size:12.2px;letter-spacing:0.327px;transform:scaleY(1.12);transform-origin:0 11px;color:#111;-webkit-text-stroke:.08px #111;">launch</div>
<svg class="a" style="left:79.91px;top:449.94px;" width="17.12" height="17.64" viewBox="0 0 16 16"><path d="M2.500 1h8l3.500 3.500V15h-11.500z" fill="#dbe8f5" stroke="#7a98c4" stroke-width="1.200"/><path d="M10.500 1v3.500H14" fill="#f4f8fc" stroke="#6388bd" stroke-width=".8"/><path d="M4.500 4.500l5 5" stroke="#eaa050" stroke-width="2.400" stroke-linecap="round"/><circle cx="10" cy="10.500" r="2.200" fill="#dc6656"/><path d="M4.500 12.500h4" stroke="#7fa2d4" stroke-width="1.400"/></svg>
<div class="a t " style="left:105.34px;top:453px;height:14px;line-height:14px;font-size:12.2px;letter-spacing:0.185px;transform:scaleY(1.12);transform-origin:0 11px;color:#111;-webkit-text-stroke:.08px #111;">CashShopServer.java</div>
<svg class="a" style="left:79.91px;top:467.94px;" width="17.12" height="17.64" viewBox="0 0 16 16"><path d="M2.500 1h8l3.500 3.500V15h-11.500z" fill="#dbe8f5" stroke="#7a98c4" stroke-width="1.200"/><path d="M10.500 1v3.500H14" fill="#f4f8fc" stroke="#6388bd" stroke-width=".8"/><path d="M4.500 4.500l5 5" stroke="#eaa050" stroke-width="2.400" stroke-linecap="round"/><circle cx="10" cy="10.500" r="2.200" fill="#dc6656"/><path d="M4.500 12.500h4" stroke="#7fa2d4" stroke-width="1.400"/></svg>
<div class="a t " style="left:105.34px;top:472px;height:14px;line-height:14px;font-size:12.2px;letter-spacing:0.143px;transform:scaleY(1.12);transform-origin:0 11px;color:#111;-webkit-text-stroke:.08px #111;">ChannelServer.java</div>
<svg class="a" style="left:79.91px;top:485.94px;" width="17.12" height="17.64" viewBox="0 0 16 16"><path d="M2.500 1h8l3.500 3.500V15h-11.500z" fill="#dbe8f5" stroke="#7a98c4" stroke-width="1.200"/><path d="M10.500 1v3.500H14" fill="#f4f8fc" stroke="#6388bd" stroke-width=".8"/><path d="M4.500 4.500l5 5" stroke="#eaa050" stroke-width="2.400" stroke-linecap="round"/><circle cx="10" cy="10.500" r="2.200" fill="#dc6656"/><path d="M4.500 12.500h4" stroke="#7fa2d4" stroke-width="1.400"/></svg>
<div class="a t " style="left:105.34px;top:490px;height:14px;line-height:14px;font-size:12.2px;letter-spacing:0.162px;transform:scaleY(1.12);transform-origin:0 11px;color:#111;-webkit-text-stroke:.08px #111;">LoginServer.java</div>
<svg class="a" style="left:79.91px;top:503.94px;" width="17.12" height="17.64" viewBox="0 0 16 16"><path d="M2.500 1h8l3.500 3.500V15h-11.500z" fill="#dbe8f5" stroke="#7a98c4" stroke-width="1.200"/><path d="M10.500 1v3.500H14" fill="#f4f8fc" stroke="#6388bd" stroke-width=".8"/><path d="M4.500 4.500l4 4" stroke="#eaa050" stroke-width="2.400" stroke-linecap="round"/><path d="M8 8.500l7 3.800L8 16z" fill="#3cb43c" stroke="#1e7a1e" stroke-width=".7"/></svg>
<div class="a t " style="left:105.34px;top:508px;height:14px;line-height:14px;font-size:12.2px;letter-spacing:-0.116px;transform:scaleY(1.12);transform-origin:0 11px;color:#111;-webkit-text-stroke:.08px #111;">Start.java</div>
<svg class="a" style="left:45.34px;top:525.76px" width="10" height="10" viewBox="0 0 10 10"><rect x=".6" y=".6" width="8.8" height="8.8" rx="2.4" fill="#f4f6fb" stroke="#8f9bb3" stroke-width="1.1"/><path d="M3 5h4" stroke="#3f62c4" stroke-width="1.1"/><path d="M5 3v4" stroke="#3f62c4" stroke-width="1.1"/></svg>
<svg class="a" style="left:61.75px;top:521.94px;" width="17.12" height="17.64" viewBox="0 0 16 16"><rect x="2" y="2.200" width="12" height="11.600" fill="#f3cf6e" stroke="#b48c24" stroke-width="1.300"/><path d="M2 8h12M8 2.200v11.600" stroke="#c59a30" stroke-width="1.200"/><rect x="3.400" y="3.600" width="3.400" height="3" fill="#fdf0c4"/><rect x="9.400" y="3.600" width="3.400" height="3" fill="#fdf0c4"/><rect x="3.400" y="9.400" width="3.400" height="3" fill="#f9e29a"/><rect x="9.400" y="9.400" width="3.400" height="3" fill="#f9e29a"/></svg>
<div class="a t " style="left:85.62px;top:523px;height:14px;line-height:14px;font-size:12.2px;letter-spacing:0.266px;transform:scaleY(1.12);transform-origin:0 11px;color:#111;-webkit-text-stroke:.08px #111;">launch.helpers</div>
<svg class="a" style="left:45.34px;top:543.76px" width="10" height="10" viewBox="0 0 10 10"><rect x=".6" y=".6" width="8.8" height="8.8" rx="2.4" fill="#f4f6fb" stroke="#8f9bb3" stroke-width="1.1"/><path d="M3 5h4" stroke="#3f62c4" stroke-width="1.1"/><path d="M5 3v4" stroke="#3f62c4" stroke-width="1.1"/></svg>
<svg class="a" style="left:61.75px;top:539.94px;" width="17.12" height="17.64" viewBox="0 0 16 16"><rect x="2" y="2.200" width="12" height="11.600" fill="#f3cf6e" stroke="#b48c24" stroke-width="1.300"/><path d="M2 8h12M8 2.200v11.600" stroke="#c59a30" stroke-width="1.200"/><rect x="3.400" y="3.600" width="3.400" height="3" fill="#fdf0c4"/><rect x="9.400" y="3.600" width="3.400" height="3" fill="#fdf0c4"/><rect x="3.400" y="9.400" width="3.400" height="3" fill="#f9e29a"/><rect x="9.400" y="9.400" width="3.400" height="3" fill="#f9e29a"/></svg>
<div class="a t " style="left:85.62px;top:542px;height:14px;line-height:14px;font-size:12.2px;letter-spacing:0.357px;transform:scaleY(1.12);transform-origin:0 11px;color:#111;-webkit-text-stroke:.08px #111;">launch.holder</div>
<svg class="a" style="left:45.34px;top:561.76px" width="10" height="10" viewBox="0 0 10 10"><rect x=".6" y=".6" width="8.8" height="8.8" rx="2.4" fill="#f4f6fb" stroke="#8f9bb3" stroke-width="1.1"/><path d="M3 5h4" stroke="#3f62c4" stroke-width="1.1"/><path d="M5 3v4" stroke="#3f62c4" stroke-width="1.1"/></svg>
<svg class="a" style="left:61.75px;top:557.94px;" width="17.12" height="17.64" viewBox="0 0 16 16"><rect x="2" y="2.200" width="12" height="11.600" fill="#f3cf6e" stroke="#b48c24" stroke-width="1.300"/><path d="M2 8h12M8 2.200v11.600" stroke="#c59a30" stroke-width="1.200"/><rect x="3.400" y="3.600" width="3.400" height="3" fill="#fdf0c4"/><rect x="9.400" y="3.600" width="3.400" height="3" fill="#fdf0c4"/><rect x="3.400" y="9.400" width="3.400" height="3" fill="#f9e29a"/><rect x="9.400" y="9.400" width="3.400" height="3" fill="#f9e29a"/></svg>
<div class="a t " style="left:85.62px;top:560px;height:14px;line-height:14px;font-size:12.2px;letter-spacing:0.344px;transform:scaleY(1.12);transform-origin:0 11px;color:#111;-webkit-text-stroke:.08px #111;">launch.rmi</div>
<svg class="a" style="left:45.34px;top:579.76px" width="10" height="10" viewBox="0 0 10 10"><rect x=".6" y=".6" width="8.8" height="8.8" rx="2.4" fill="#f4f6fb" stroke="#8f9bb3" stroke-width="1.1"/><path d="M3 5h4" stroke="#3f62c4" stroke-width="1.1"/><path d="M5 3v4" stroke="#3f62c4" stroke-width="1.1"/></svg>
<svg class="a" style="left:61.75px;top:575.94px;" width="17.12" height="17.64" viewBox="0 0 16 16"><rect x="2" y="2.200" width="12" height="11.600" fill="#f3cf6e" stroke="#b48c24" stroke-width="1.300"/><path d="M2 8h12M8 2.200v11.600" stroke="#c59a30" stroke-width="1.200"/><rect x="3.400" y="3.600" width="3.400" height="3" fill="#fdf0c4"/><rect x="9.400" y="3.600" width="3.400" height="3" fill="#fdf0c4"/><rect x="3.400" y="9.400" width="3.400" height="3" fill="#f9e29a"/><rect x="9.400" y="9.400" width="3.400" height="3" fill="#f9e29a"/></svg>
<div class="a t " style="left:85.62px;top:578px;height:14px;line-height:14px;font-size:12.2px;letter-spacing:0.351px;transform:scaleY(1.12);transform-origin:0 11px;color:#111;-webkit-text-stroke:.08px #111;">launch.world</div>
<svg class="a" style="left:45.34px;top:597.76px" width="10" height="10" viewBox="0 0 10 10"><rect x=".6" y=".6" width="8.8" height="8.8" rx="2.4" fill="#f4f6fb" stroke="#8f9bb3" stroke-width="1.1"/><path d="M3 5h4" stroke="#3f62c4" stroke-width="1.1"/><path d="M5 3v4" stroke="#3f62c4" stroke-width="1.1"/></svg>
<svg class="a" style="left:61.75px;top:593.94px;" width="17.12" height="17.64" viewBox="0 0 16 16"><rect x="2" y="2.200" width="12" height="11.600" fill="#f3cf6e" stroke="#b48c24" stroke-width="1.300"/><path d="M2 8h12M8 2.200v11.600" stroke="#c59a30" stroke-width="1.200"/><rect x="3.400" y="3.600" width="3.400" height="3" fill="#fdf0c4"/><rect x="9.400" y="3.600" width="3.400" height="3" fill="#fdf0c4"/><rect x="3.400" y="9.400" width="3.400" height="3" fill="#f9e29a"/><rect x="9.400" y="9.400" width="3.400" height="3" fill="#f9e29a"/></svg>
<div class="a t " style="left:85.62px;top:596px;height:14px;line-height:14px;font-size:12.2px;letter-spacing:0.220px;transform:scaleY(1.12);transform-origin:0 11px;color:#111;-webkit-text-stroke:.08px #111;">packet.creators</div>
<svg class="a" style="left:45.34px;top:615.76px" width="10" height="10" viewBox="0 0 10 10"><rect x=".6" y=".6" width="8.8" height="8.8" rx="2.4" fill="#f4f6fb" stroke="#8f9bb3" stroke-width="1.1"/><path d="M3 5h4" stroke="#3f62c4" stroke-width="1.1"/><path d="M5 3v4" stroke="#3f62c4" stroke-width="1.1"/></svg>
<svg class="a" style="left:61.75px;top:611.94px;" width="17.12" height="17.64" viewBox="0 0 16 16"><rect x="2" y="2.200" width="12" height="11.600" fill="#f3cf6e" stroke="#b48c24" stroke-width="1.300"/><path d="M2 8h12M8 2.200v11.600" stroke="#c59a30" stroke-width="1.200"/><rect x="3.400" y="3.600" width="3.400" height="3" fill="#fdf0c4"/><rect x="9.400" y="3.600" width="3.400" height="3" fill="#fdf0c4"/><rect x="3.400" y="9.400" width="3.400" height="3" fill="#f9e29a"/><rect x="9.400" y="9.400" width="3.400" height="3" fill="#f9e29a"/></svg>
<div class="a t " style="left:85.62px;top:614px;height:14px;line-height:14px;font-size:12.2px;letter-spacing:0.290px;transform:scaleY(1.12);transform-origin:0 11px;color:#111;-webkit-text-stroke:.08px #111;">packet.crypto</div>
<svg class="a" style="left:45.34px;top:633.76px" width="10" height="10" viewBox="0 0 10 10"><rect x=".6" y=".6" width="8.8" height="8.8" rx="2.4" fill="#f4f6fb" stroke="#8f9bb3" stroke-width="1.1"/><path d="M3 5h4" stroke="#3f62c4" stroke-width="1.1"/><path d="M5 3v4" stroke="#3f62c4" stroke-width="1.1"/></svg>
<svg class="a" style="left:61.75px;top:629.94px;" width="17.12" height="17.64" viewBox="0 0 16 16"><rect x="2" y="2.200" width="12" height="11.600" fill="#f3cf6e" stroke="#b48c24" stroke-width="1.300"/><path d="M2 8h12M8 2.200v11.600" stroke="#c59a30" stroke-width="1.200"/><rect x="3.400" y="3.600" width="3.400" height="3" fill="#fdf0c4"/><rect x="9.400" y="3.600" width="3.400" height="3" fill="#fdf0c4"/><rect x="3.400" y="9.400" width="3.400" height="3" fill="#f9e29a"/><rect x="9.400" y="9.400" width="3.400" height="3" fill="#f9e29a"/></svg>
<div class="a t " style="left:85.62px;top:632px;height:14px;line-height:14px;font-size:12.2px;letter-spacing:0.286px;transform:scaleY(1.12);transform-origin:0 11px;color:#111;-webkit-text-stroke:.08px #111;">packet.opcode</div>
<svg class="a" style="left:45.34px;top:651.76px" width="10" height="10" viewBox="0 0 10 10"><rect x=".6" y=".6" width="8.8" height="8.8" rx="2.4" fill="#f4f6fb" stroke="#8f9bb3" stroke-width="1.1"/><path d="M3 5h4" stroke="#3f62c4" stroke-width="1.1"/><path d="M5 3v4" stroke="#3f62c4" stroke-width="1.1"/></svg>
<svg class="a" style="left:61.75px;top:647.94px;" width="17.12" height="17.64" viewBox="0 0 16 16"><rect x="2" y="2.200" width="12" height="11.600" fill="#f3cf6e" stroke="#b48c24" stroke-width="1.300"/><path d="M2 8h12M8 2.200v11.600" stroke="#c59a30" stroke-width="1.200"/><rect x="3.400" y="3.600" width="3.400" height="3" fill="#fdf0c4"/><rect x="9.400" y="3.600" width="3.400" height="3" fill="#fdf0c4"/><rect x="3.400" y="9.400" width="3.400" height="3" fill="#f9e29a"/><rect x="9.400" y="9.400" width="3.400" height="3" fill="#f9e29a"/></svg>
<div class="a t " style="left:85.62px;top:651px;height:14px;line-height:14px;font-size:12.2px;letter-spacing:0.255px;transform:scaleY(1.12);transform-origin:0 11px;color:#111;-webkit-text-stroke:.08px #111;">packet.skills</div>
<svg class="a" style="left:45.34px;top:669.76px" width="10" height="10" viewBox="0 0 10 10"><rect x=".6" y=".6" width="8.8" height="8.8" rx="2.4" fill="#f4f6fb" stroke="#8f9bb3" stroke-width="1.1"/><path d="M3 5h4" stroke="#3f62c4" stroke-width="1.1"/><path d="M5 3v4" stroke="#3f62c4" stroke-width="1.1"/></svg>
<svg class="a" style="left:61.75px;top:665.94px;" width="17.12" height="17.64" viewBox="0 0 16 16"><rect x="2" y="2.200" width="12" height="11.600" fill="#f3cf6e" stroke="#b48c24" stroke-width="1.300"/><path d="M2 8h12M8 2.200v11.600" stroke="#c59a30" stroke-width="1.200"/><rect x="3.400" y="3.600" width="3.400" height="3" fill="#fdf0c4"/><rect x="9.400" y="3.600" width="3.400" height="3" fill="#fdf0c4"/><rect x="3.400" y="9.400" width="3.400" height="3" fill="#f9e29a"/><rect x="9.400" y="9.400" width="3.400" height="3" fill="#f9e29a"/></svg>
<div class="a t " style="left:85.62px;top:669px;height:14px;line-height:14px;font-size:12.2px;letter-spacing:0.189px;transform:scaleY(1.12);transform-origin:0 11px;color:#111;-webkit-text-stroke:.08px #111;">packet.transfer.read</div>
<svg class="a" style="left:45.34px;top:687.76px" width="10" height="10" viewBox="0 0 10 10"><rect x=".6" y=".6" width="8.8" height="8.8" rx="2.4" fill="#f4f6fb" stroke="#8f9bb3" stroke-width="1.1"/><path d="M3 5h4" stroke="#3f62c4" stroke-width="1.1"/><path d="M5 3v4" stroke="#3f62c4" stroke-width="1.1"/></svg>
<svg class="a" style="left:61.75px;top:683.94px;" width="17.12" height="17.64" viewBox="0 0 16 16"><rect x="2" y="2.200" width="12" height="11.600" fill="#f3cf6e" stroke="#b48c24" stroke-width="1.300"/><path d="M2 8h12M8 2.200v11.600" stroke="#c59a30" stroke-width="1.200"/><rect x="3.400" y="3.600" width="3.400" height="3" fill="#fdf0c4"/><rect x="9.400" y="3.600" width="3.400" height="3" fill="#fdf0c4"/><rect x="3.400" y="9.400" width="3.400" height="3" fill="#f9e29a"/><rect x="9.400" y="9.400" width="3.400" height="3" fill="#f9e29a"/></svg>
<div class="a t " style="left:85.62px;top:687px;height:14px;line-height:14px;font-size:12.2px;letter-spacing:0.241px;transform:scaleY(1.12);transform-origin:0 11px;color:#111;-webkit-text-stroke:.08px #111;">packet.transfer.write</div>
<svg class="a" style="left:45.34px;top:705.76px" width="10" height="10" viewBox="0 0 10 10"><rect x=".6" y=".6" width="8.8" height="8.8" rx="2.4" fill="#f4f6fb" stroke="#8f9bb3" stroke-width="1.1"/><path d="M3 5h4" stroke="#3f62c4" stroke-width="1.1"/><path d="M5 3v4" stroke="#3f62c4" stroke-width="1.1"/></svg>
<svg class="a" style="left:61.75px;top:701.94px;" width="17.12" height="17.64" viewBox="0 0 16 16"><rect x="2" y="2.200" width="12" height="11.600" fill="#f3cf6e" stroke="#b48c24" stroke-width="1.300"/><path d="M2 8h12M8 2.200v11.600" stroke="#c59a30" stroke-width="1.200"/><rect x="3.400" y="3.600" width="3.400" height="3" fill="#fdf0c4"/><rect x="9.400" y="3.600" width="3.400" height="3" fill="#fdf0c4"/><rect x="3.400" y="9.400" width="3.400" height="3" fill="#f9e29a"/><rect x="9.400" y="9.400" width="3.400" height="3" fill="#f9e29a"/></svg>
<div class="a t " style="left:85.62px;top:705px;height:14px;line-height:14px;font-size:12.2px;letter-spacing:0.008px;transform:scaleY(1.12);transform-origin:0 11px;color:#111;-webkit-text-stroke:.08px #111;">provider</div>
<svg class="a" style="left:45.34px;top:723.76px" width="10" height="10" viewBox="0 0 10 10"><rect x=".6" y=".6" width="8.8" height="8.8" rx="2.4" fill="#f4f6fb" stroke="#8f9bb3" stroke-width="1.1"/><path d="M3 5h4" stroke="#3f62c4" stroke-width="1.1"/><path d="M5 3v4" stroke="#3f62c4" stroke-width="1.1"/></svg>
<svg class="a" style="left:61.75px;top:719.94px;" width="17.12" height="17.64" viewBox="0 0 16 16"><rect x="2" y="2.200" width="12" height="11.600" fill="#f3cf6e" stroke="#b48c24" stroke-width="1.300"/><path d="M2 8h12M8 2.200v11.600" stroke="#c59a30" stroke-width="1.200"/><rect x="3.400" y="3.600" width="3.400" height="3" fill="#fdf0c4"/><rect x="9.400" y="3.600" width="3.400" height="3" fill="#fdf0c4"/><rect x="3.400" y="9.400" width="3.400" height="3" fill="#f9e29a"/><rect x="9.400" y="9.400" width="3.400" height="3" fill="#f9e29a"/></svg>
<div class="a t " style="left:85.62px;top:723px;height:14px;line-height:14px;font-size:12.2px;letter-spacing:0.099px;transform:scaleY(1.12);transform-origin:0 11px;color:#111;-webkit-text-stroke:.08px #111;">provider.WzXML</div>
<svg class="a" style="left:45.34px;top:741.76px" width="10" height="10" viewBox="0 0 10 10"><rect x=".6" y=".6" width="8.8" height="8.8" rx="2.4" fill="#f4f6fb" stroke="#8f9bb3" stroke-width="1.1"/><path d="M3 5h4" stroke="#3f62c4" stroke-width="1.1"/></svg>
<svg class="a" style="left:61.75px;top:737.94px;" width="17.12" height="17.64" viewBox="0 0 16 16"><rect x="2" y="2.200" width="12" height="11.600" fill="#f3cf6e" stroke="#b48c24" stroke-width="1.300"/><path d="M2 8h12M8 2.200v11.600" stroke="#c59a30" stroke-width="1.200"/><rect x="3.400" y="3.600" width="3.400" height="3" fill="#fdf0c4"/><rect x="9.400" y="3.600" width="3.400" height="3" fill="#fdf0c4"/><rect x="3.400" y="9.400" width="3.400" height="3" fill="#f9e29a"/><rect x="9.400" y="9.400" width="3.400" height="3" fill="#f9e29a"/></svg>
<div class="a t " style="left:85.62px;top:741px;height:14px;line-height:14px;font-size:12.2px;letter-spacing:0.319px;transform:scaleY(1.12);transform-origin:0 11px;color:#111;-webkit-text-stroke:.08px #111;">scripting</div>
<svg class="a" style="left:79.91px;top:755.94px;" width="17.12" height="17.64" viewBox="0 0 16 16"><path d="M2.500 1h8l3.500 3.500V15h-11.500z" fill="#dbe8f5" stroke="#7a98c4" stroke-width="1.200"/><path d="M10.500 1v3.500H14" fill="#f4f8fc" stroke="#6388bd" stroke-width=".8"/><path d="M4.500 4.500l5 5" stroke="#eaa050" stroke-width="2.400" stroke-linecap="round"/><circle cx="10" cy="10.500" r="2.200" fill="#dc6656"/><path d="M4.500 12.500h4" stroke="#7fa2d4" stroke-width="1.400"/></svg>
<div class="a t " style="left:105.34px;top:760px;height:14px;line-height:14px;font-size:12.2px;letter-spacing:0.119px;transform:scaleY(1.12);transform-origin:0 11px;color:#111;-webkit-text-stroke:.08px #111;">AbstractPlayerInteraction.java</div>
<svg class="a" style="left:79.91px;top:773.94px;" width="17.12" height="17.64" viewBox="0 0 16 16"><path d="M2.500 1h8l3.500 3.500V15h-11.500z" fill="#dbe8f5" stroke="#7a98c4" stroke-width="1.200"/><path d="M10.500 1v3.500H14" fill="#f4f8fc" stroke="#6388bd" stroke-width=".8"/><path d="M5 6h6M5 8.500h6M5 11h6" stroke="#a9c0de" stroke-width="1.200"/></svg>
<div class="a t " style="left:105.34px;top:778px;height:14px;line-height:14px;font-size:12.2px;letter-spacing:0.154px;transform:scaleY(1.12);transform-origin:0 11px;color:#111;-webkit-text-stroke:.08px #111;">AbstractScriptManager.java</div>
<svg class="a" style="left:79.91px;top:791.94px;" width="17.12" height="17.64" viewBox="0 0 16 16"><path d="M2.500 1h8l3.500 3.500V15h-11.500z" fill="#dbe8f5" stroke="#7a98c4" stroke-width="1.200"/><path d="M10.500 1v3.500H14" fill="#f4f8fc" stroke="#6388bd" stroke-width=".8"/><path d="M4.500 4.500l5 5" stroke="#eaa050" stroke-width="2.400" stroke-linecap="round"/><circle cx="10" cy="10.500" r="2.200" fill="#dc6656"/><path d="M4.500 12.500h4" stroke="#7fa2d4" stroke-width="1.400"/></svg>
<div class="a t " style="left:105.34px;top:796px;height:14px;line-height:14px;font-size:12.2px;letter-spacing:0.146px;transform:scaleY(1.12);transform-origin:0 11px;color:#111;-webkit-text-stroke:.08px #111;">EventInstanceManager.java</div>
<svg class="a" style="left:79.91px;top:809.94px;" width="17.12" height="17.64" viewBox="0 0 16 16"><path d="M2.500 1h8l3.500 3.500V15h-11.500z" fill="#dbe8f5" stroke="#7a98c4" stroke-width="1.200"/><path d="M10.500 1v3.500H14" fill="#f4f8fc" stroke="#6388bd" stroke-width=".8"/><path d="M4.500 4.500l5 5" stroke="#eaa050" stroke-width="2.400" stroke-linecap="round"/><circle cx="10" cy="10.500" r="2.200" fill="#dc6656"/><path d="M4.500 12.500h4" stroke="#7fa2d4" stroke-width="1.400"/></svg>
<div class="a t " style="left:105.34px;top:811px;height:14px;line-height:14px;font-size:12.2px;letter-spacing:0.179px;transform:scaleY(1.12);transform-origin:0 11px;color:#111;-webkit-text-stroke:.08px #111;">EventManager.java</div>
<svg class="a" style="left:79.91px;top:827.94px;" width="17.12" height="17.64" viewBox="0 0 16 16"><path d="M2.500 1h8l3.500 3.500V15h-11.500z" fill="#dbe8f5" stroke="#7a98c4" stroke-width="1.200"/><path d="M10.500 1v3.500H14" fill="#f4f8fc" stroke="#6388bd" stroke-width=".8"/><path d="M4.500 4.500l5 5" stroke="#eaa050" stroke-width="2.400" stroke-linecap="round"/><circle cx="10" cy="10.500" r="2.200" fill="#dc6656"/><path d="M4.500 12.500h4" stroke="#7fa2d4" stroke-width="1.400"/></svg>
<div class="a t " style="left:105.34px;top:830px;height:14px;line-height:14px;font-size:12.2px;letter-spacing:0.131px;transform:scaleY(1.12);transform-origin:0 11px;color:#111;-webkit-text-stroke:.08px #111;">EventScriptManager.java</div>
<svg class="a" style="left:79.91px;top:845.94px;" width="17.12" height="17.64" viewBox="0 0 16 16"><path d="M2.500 1h8l3.500 3.500V15h-11.500z" fill="#dbe8f5" stroke="#7a98c4" stroke-width="1.200"/><path d="M10.500 1v3.500H14" fill="#f4f8fc" stroke="#6388bd" stroke-width=".8"/><path d="M4.500 4.500l5 5" stroke="#eaa050" stroke-width="2.400" stroke-linecap="round"/><circle cx="10" cy="10.500" r="2.200" fill="#dc6656"/><path d="M4.500 12.500h4" stroke="#7fa2d4" stroke-width="1.400"/></svg>
<div class="a t " style="left:105.34px;top:848px;height:14px;line-height:14px;font-size:12.2px;letter-spacing:-0.013px;transform:scaleY(1.12);transform-origin:0 11px;color:#111;-webkit-text-stroke:.08px #111;">NPCAutoWriterHelper.java</div>
<svg class="a" style="left:79.91px;top:863.94px;" width="17.12" height="17.64" viewBox="0 0 16 16"><path d="M2.500 1h8l3.500 3.500V15h-11.500z" fill="#dbe8f5" stroke="#7a98c4" stroke-width="1.200"/><path d="M10.500 1v3.500H14" fill="#f4f8fc" stroke="#6388bd" stroke-width=".8"/><path d="M4.500 4.500l5 5" stroke="#eaa050" stroke-width="2.400" stroke-linecap="round"/><circle cx="10" cy="10.500" r="2.200" fill="#dc6656"/><path d="M4.500 12.500h4" stroke="#7fa2d4" stroke-width="1.400"/></svg>
<div class="a t " style="left:105.34px;top:866px;height:14px;line-height:14px;font-size:12.2px;letter-spacing:0.191px;transform:scaleY(1.12);transform-origin:0 11px;color:#111;-webkit-text-stroke:.08px #111;">NPCConversationManager.java</div>
<svg class="a" style="left:79.91px;top:881.94px;" width="17.12" height="17.64" viewBox="0 0 16 16"><path d="M2.500 1h8l3.500 3.500V15h-11.500z" fill="#dbe8f5" stroke="#7a98c4" stroke-width="1.200"/><path d="M10.500 1v3.500H14" fill="#f4f8fc" stroke="#6388bd" stroke-width=".8"/><path d="M4.500 4.500l5 5" stroke="#eaa050" stroke-width="2.400" stroke-linecap="round"/><circle cx="10" cy="10.500" r="2.200" fill="#dc6656"/><path d="M4.500 12.500h4" stroke="#7fa2d4" stroke-width="1.400"/></svg>
<div class="a t " style="left:105.34px;top:884px;height:14px;line-height:14px;font-size:12.2px;letter-spacing:0.156px;transform:scaleY(1.12);transform-origin:0 11px;color:#111;-webkit-text-stroke:.08px #111;">NPCScriptManager.java</div>
<svg class="a" style="left:79.91px;top:899.94px;" width="17.12" height="17.64" viewBox="0 0 16 16"><path d="M2.500 1h8l3.500 3.500V15h-11.500z" fill="#dbe8f5" stroke="#7a98c4" stroke-width="1.200"/><path d="M10.500 1v3.500H14" fill="#f4f8fc" stroke="#6388bd" stroke-width=".8"/><path d="M4.500 4.500l5 5" stroke="#eaa050" stroke-width="2.400" stroke-linecap="round"/><circle cx="10" cy="10.500" r="2.200" fill="#dc6656"/><path d="M4.500 12.500h4" stroke="#7fa2d4" stroke-width="1.400"/></svg>
<div class="a t " style="left:105.34px;top:902px;height:14px;line-height:14px;font-size:12.2px;letter-spacing:0.087px;transform:scaleY(1.12);transform-origin:0 11px;color:#111;-webkit-text-stroke:.08px #111;">PortalPlayerInteraction.java</div>
<svg class="a" style="left:79.91px;top:917.94px;" width="17.12" height="17.64" viewBox="0 0 16 16"><path d="M2.500 1h8l3.500 3.500V15h-11.500z" fill="#f6f9fd" stroke="#6388bd" stroke-width="1.200"/><path d="M4.500 9h7.500" stroke="#7fa2d4" stroke-width="1.600"/><path d="M4.500 12h5" stroke="#b9cce6" stroke-width="1.200"/></svg>
<div class="a t " style="left:105.34px;top:920px;height:14px;line-height:14px;font-size:12.2px;letter-spacing:0.091px;transform:scaleY(1.12);transform-origin:0 11px;color:#111;-webkit-text-stroke:.08px #111;">PortalScript.java</div>
<svg class="a" style="left:79.91px;top:935.94px;" width="17.12" height="17.64" viewBox="0 0 16 16"><path d="M2.500 1h8l3.500 3.500V15h-11.500z" fill="#dbe8f5" stroke="#7a98c4" stroke-width="1.200"/><path d="M10.500 1v3.500H14" fill="#f4f8fc" stroke="#6388bd" stroke-width=".8"/><path d="M4.500 4.500l5 5" stroke="#eaa050" stroke-width="2.400" stroke-linecap="round"/><circle cx="10" cy="10.500" r="2.200" fill="#dc6656"/><path d="M4.500 12.500h4" stroke="#7fa2d4" stroke-width="1.400"/></svg>
<div class="a t " style="left:105.34px;top:939px;height:14px;line-height:14px;font-size:12.2px;letter-spacing:0.141px;transform:scaleY(1.12);transform-origin:0 11px;color:#111;-webkit-text-stroke:.08px #111;">PortalScriptManager.java</div>
<svg class="a" style="left:79.91px;top:953.94px;" width="17.12" height="17.64" viewBox="0 0 16 16"><path d="M2.500 1h8l3.500 3.500V15h-11.500z" fill="#dbe8f5" stroke="#7a98c4" stroke-width="1.200"/><path d="M10.500 1v3.500H14" fill="#f4f8fc" stroke="#6388bd" stroke-width=".8"/><path d="M4.500 4.500l5 5" stroke="#eaa050" stroke-width="2.400" stroke-linecap="round"/><circle cx="10" cy="10.500" r="2.200" fill="#dc6656"/><path d="M4.500 12.500h4" stroke="#7fa2d4" stroke-width="1.400"/></svg>
<div class="a t " style="left:105.34px;top:957px;height:14px;line-height:14px;font-size:12.2px;letter-spacing:0.133px;transform:scaleY(1.12);transform-origin:0 11px;color:#111;-webkit-text-stroke:.08px #111;">ReactorActionManager.java</div>
<svg class="a" style="left:79.91px;top:971.94px;" width="17.12" height="17.64" viewBox="0 0 16 16"><path d="M2.500 1h8l3.500 3.500V15h-11.500z" fill="#f6f9fd" stroke="#6388bd" stroke-width="1.200"/><path d="M4.500 9h7.500" stroke="#7fa2d4" stroke-width="1.600"/><path d="M4.500 12h5" stroke="#b9cce6" stroke-width="1.200"/></svg>
<div class="a t " style="left:105.34px;top:975px;height:14px;line-height:14px;font-size:12.2px;letter-spacing:0.060px;transform:scaleY(1.12);transform-origin:0 11px;color:#111;-webkit-text-stroke:.08px #111;">ReactorScript.java</div>
<svg class="a" style="left:79.91px;top:989.94px;" width="17.12" height="17.64" viewBox="0 0 16 16"><path d="M2.500 1h8l3.500 3.500V15h-11.500z" fill="#dbe8f5" stroke="#7a98c4" stroke-width="1.200"/><path d="M10.500 1v3.500H14" fill="#f4f8fc" stroke="#6388bd" stroke-width=".8"/><path d="M4.500 4.500l5 5" stroke="#eaa050" stroke-width="2.400" stroke-linecap="round"/><circle cx="10" cy="10.500" r="2.200" fill="#dc6656"/><path d="M4.500 12.500h4" stroke="#7fa2d4" stroke-width="1.400"/></svg>
<div class="a t " style="left:105.34px;top:993px;height:14px;line-height:14px;font-size:12.2px;letter-spacing:0.138px;transform:scaleY(1.12);transform-origin:0 11px;color:#111;-webkit-text-stroke:.08px #111;">ReactorScriptManager.java</div>
<svg class="a" style="left:45.34px;top:1011.76px" width="10" height="10" viewBox="0 0 10 10"><rect x=".6" y=".6" width="8.8" height="8.8" rx="2.4" fill="#f4f6fb" stroke="#8f9bb3" stroke-width="1.1"/><path d="M3 5h4" stroke="#3f62c4" stroke-width="1.1"/><path d="M5 3v4" stroke="#3f62c4" stroke-width="1.1"/></svg>
<svg class="a" style="left:61.75px;top:1007.94px;" width="17.12" height="17.64" viewBox="0 0 16 16"><rect x="2" y="2.200" width="12" height="11.600" fill="#f3cf6e" stroke="#b48c24" stroke-width="1.300"/><path d="M2 8h12M8 2.200v11.600" stroke="#c59a30" stroke-width="1.200"/><rect x="3.400" y="3.600" width="3.400" height="3" fill="#fdf0c4"/><rect x="9.400" y="3.600" width="3.400" height="3" fill="#fdf0c4"/><rect x="3.400" y="9.400" width="3.400" height="3" fill="#f9e29a"/><rect x="9.400" y="9.400" width="3.400" height="3" fill="#f9e29a"/></svg>
<div class="a t " style="left:85.62px;top:1011px;height:14px;line-height:14px;font-size:12.2px;letter-spacing:-0.071px;transform:scaleY(1.12);transform-origin:0 11px;color:#111;-webkit-text-stroke:.08px #111;">server.items</div>
<div class="a " style="left:4.15px;top:1014.23px;width:354.42px;height:1.04px;background:#a0a6b4;"></div>
<div class="a " style="left:0.00px;top:1015.26px;width:1920.00px;height:22.57px;background:#f0f0f0;"></div>
<div class="a " style="left:343.01px;top:105.34px;width:15.57px;height:907.59px;background:#efefef;border-left:1px solid #e2e2e2;"></div>
<svg class="a" style="left:347.68px;top:112.61px;" width="6.23" height="3.63" viewBox="0 0 8 5"><path d="M0 5h8L4 0z" fill="#555"/></svg>
<svg class="a" style="left:347.68px;top:1002.03px;" width="6.23" height="3.63" viewBox="0 0 8 5"><path d="M0 0h8L4 5z" fill="#555"/></svg>
<div class="a " style="left:343.78px;top:125.58px;width:14.27px;height:753.99px;background:linear-gradient(90deg,#f4f4f4 0,#e6e6e6 45%,#cdcdcd 55%,#d6d6d6 100%);border:1px solid #9a9a9a;border-radius:2px;"></div>
<div class="a " style="left:347.68px;top:499.72px;width:6.75px;height:1.04px;background:#6a6a6a;"></div>
<div class="a " style="left:347.68px;top:502.05px;width:6.75px;height:1.04px;background:#6a6a6a;"></div>
<div class="a " style="left:347.68px;top:504.39px;width:6.75px;height:1.04px;background:#6a6a6a;"></div>
<div class="a " style="left:363.76px;top:85.62px;width:1552.61px;height:19.46px;border-bottom:1px solid #a8acb6;"></div>
<div class="a " style="left:364.80px;top:86.40px;width:93.41px;height:18.16px;background:linear-gradient(#f2f2f2 0,#e6e6e6 45%,#d6d6d6 55%,#d0d0d0 100%);border:1px solid #b2b2b2;border-bottom:0;border-left:0;"></div>
<div class="a t " style="left:372.06px;top:90px;height:14px;line-height:14px;font-size:12px;letter-spacing:0.093px;transform:scaleY(1.06);transform-origin:0 11px;color:#111;">Start Page</div>
<svg class="a" style="left:446.53px;top:91.85px;" width="8.04" height="7.78" viewBox="0 0 8 8"><rect x=".5" y=".5" width="7" height="7" fill="#d0d0d0" stroke="#6a6a6a"/><path d="M2 2l4 4M6 2L2 6" stroke="#222" stroke-width="1.500"/></svg>
<div class="a " style="left:458.21px;top:86.40px;width:227.81px;height:18.16px;background:linear-gradient(#f2f2f2 0,#e6e6e6 45%,#d6d6d6 55%,#d0d0d0 100%);border:1px solid #b2b2b2;border-bottom:0;border-left:0;"></div>
<svg class="a" style="left:463.39px;top:87.18px;" width="15.57" height="16.61" viewBox="0 0 16 16"><path d="M2.500 1h8l3.500 3.500V15h-11.500z" fill="#dbe8f5" stroke="#7a98c4" stroke-width="1.200"/><path d="M10.500 1v3.500H14" fill="#f4f8fc" stroke="#6388bd" stroke-width=".8"/><path d="M4.500 4.500l5 5" stroke="#eaa050" stroke-width="2.400" stroke-linecap="round"/><circle cx="10" cy="10.500" r="2.200" fill="#dc6656"/><path d="M4.500 12.500h4" stroke="#7fa2d4" stroke-width="1.400"/></svg>
<div class="a t " style="left:481.04px;top:90px;height:14px;line-height:14px;font-size:12px;letter-spacing:0.770px;transform:scaleY(1.06);transform-origin:0 11px;color:#111;">NPCConversationManager.java</div>
<svg class="a" style="left:673.82px;top:91.85px;" width="8.04" height="7.78" viewBox="0 0 8 8"><rect x=".5" y=".5" width="7" height="7" fill="#d0d0d0" stroke="#6a6a6a"/><path d="M2 2l4 4M6 2L2 6" stroke="#222" stroke-width="1.500"/></svg>
<div class="a " style="left:686.01px;top:85.88px;width:140.63px;height:19.46px;background:linear-gradient(#f4f9ff 0,#e3eefb 45%,#d6e6f8 55%,#eaf3fd 100%);border:1px solid #9fc0e4;border-bottom:0;"></div>
<svg class="a" style="left:689.12px;top:87.18px;" width="15.57" height="16.61" viewBox="0 0 16 16"><path d="M2.500 1h8l3.500 3.500V15h-11.500z" fill="#dbe8f5" stroke="#7a98c4" stroke-width="1.200"/><path d="M10.500 1v3.500H14" fill="#f4f8fc" stroke="#6388bd" stroke-width=".8"/><path d="M4.500 4.500l5 5" stroke="#eaa050" stroke-width="2.400" stroke-linecap="round"/><circle cx="10" cy="10.500" r="2.200" fill="#dc6656"/><path d="M4.500 12.500h4" stroke="#7fa2d4" stroke-width="1.400"/></svg>
<div class="a t " style="left:706.77px;top:90px;height:14px;line-height:14px;font-size:12px;letter-spacing:0.325px;transform:scaleY(1.06);transform-origin:0 11px;color:#111;">MapleClient.java</div>
<svg class="a" style="left:814.44px;top:91.85px;" width="8.04" height="7.78" viewBox="0 0 8 8"><rect x=".5" y=".5" width="7" height="7" fill="#d0d0d0" stroke="#6a6a6a"/><path d="M2 2l4 4M6 2L2 6" stroke="#222" stroke-width="1.500"/></svg>
<div class="a " style="left:826.64px;top:86.40px;width:158.27px;height:18.16px;background:linear-gradient(#f2f2f2 0,#e6e6e6 45%,#d6d6d6 55%,#d0d0d0 100%);border:1px solid #b2b2b2;border-bottom:0;border-left:0;"></div>
<svg class="a" style="left:832.35px;top:87.18px;" width="15.57" height="16.61" viewBox="0 0 16 16"><path d="M2.500 1h8l3.500 3.500V15h-11.500z" fill="#dbe8f5" stroke="#7a98c4" stroke-width="1.200"/><path d="M10.500 1v3.500H14" fill="#f4f8fc" stroke="#6388bd" stroke-width=".8"/><path d="M4.500 4.500l5 5" stroke="#eaa050" stroke-width="2.400" stroke-linecap="round"/><circle cx="10" cy="10.500" r="2.200" fill="#dc6656"/><path d="M4.500 12.500h4" stroke="#7fa2d4" stroke-width="1.400"/></svg>
<div class="a t " style="left:848.43px;top:90px;height:14px;line-height:14px;font-size:12px;letter-spacing:0.235px;transform:scaleY(1.06);transform-origin:0 11px;color:#111;">ChannelServer.java</div>
<svg class="a" style="left:972.71px;top:91.85px;" width="8.04" height="7.78" viewBox="0 0 8 8"><rect x=".5" y=".5" width="7" height="7" fill="#d0d0d0" stroke="#6a6a6a"/><path d="M2 2l4 4M6 2L2 6" stroke="#222" stroke-width="1.500"/></svg>
<div class="a " style="left:984.91px;top:86.40px;width:155.68px;height:18.16px;background:linear-gradient(#f2f2f2 0,#e6e6e6 45%,#d6d6d6 55%,#d0d0d0 100%);border:1px solid #b2b2b2;border-bottom:0;border-left:0;"></div>
<svg class="a" style="left:987.50px;top:87.18px;" width="15.57" height="16.61" viewBox="0 0 16 16"><path d="M2.500 1h8l3.500 3.500V15h-11.500z" fill="#dbe8f5" stroke="#7a98c4" stroke-width="1.200"/><path d="M10.500 1v3.500H14" fill="#f4f8fc" stroke="#6388bd" stroke-width=".8"/><path d="M4.500 4.500l5 5" stroke="#eaa050" stroke-width="2.400" stroke-linecap="round"/><circle cx="10" cy="10.500" r="2.200" fill="#dc6656"/><path d="M4.500 12.500h4" stroke="#7fa2d4" stroke-width="1.400"/></svg>
<div class="a t " style="left:1006.70px;top:90px;height:14px;line-height:14px;font-size:12px;letter-spacing:0.256px;transform:scaleY(1.06);transform-origin:0 11px;color:#111;">PlayerHandler.java</div>
<svg class="a" style="left:1126.31px;top:91.85px;" width="8.04" height="7.78" viewBox="0 0 8 8"><rect x=".5" y=".5" width="7" height="7" fill="#d0d0d0" stroke="#6a6a6a"/><path d="M2 2l4 4M6 2L2 6" stroke="#222" stroke-width="1.500"/></svg>
<div class="a " style="left:1140.58px;top:86.40px;width:163.46px;height:18.16px;background:linear-gradient(#f2f2f2 0,#e6e6e6 45%,#d6d6d6 55%,#d0d0d0 100%);border:1px solid #b2b2b2;border-bottom:0;border-left:0;"></div>
<svg class="a" style="left:1142.66px;top:87.18px;" width="15.57" height="16.61" viewBox="0 0 16 16"><path d="M2.500 1h8l3.500 3.500V15h-11.500z" fill="#dbe8f5" stroke="#7a98c4" stroke-width="1.200"/><path d="M10.500 1v3.500H14" fill="#f4f8fc" stroke="#6388bd" stroke-width=".8"/><path d="M4.500 4.500l5 5" stroke="#eaa050" stroke-width="2.400" stroke-linecap="round"/><circle cx="10" cy="10.500" r="2.200" fill="#dc6656"/><path d="M4.500 12.500h4" stroke="#7fa2d4" stroke-width="1.400"/></svg>
<div class="a t " style="left:1160.82px;top:90px;height:14px;line-height:14px;font-size:12px;letter-spacing:0.298px;transform:scaleY(1.06);transform-origin:0 11px;color:#111;">MapleCharacter.java</div>
<svg class="a" style="left:1291.85px;top:91.85px;" width="8.04" height="7.78" viewBox="0 0 8 8"><rect x=".5" y=".5" width="7" height="7" fill="#d0d0d0" stroke="#6a6a6a"/><path d="M2 2l4 4M6 2L2 6" stroke="#222" stroke-width="1.500"/></svg>
<div class="a " style="left:1304.04px;top:86.40px;width:188.37px;height:18.16px;background:linear-gradient(#f2f2f2 0,#e6e6e6 45%,#d6d6d6 55%,#d0d0d0 100%);border:1px solid #b2b2b2;border-bottom:0;border-left:0;"></div>
<svg class="a" style="left:1306.64px;top:87.18px;" width="15.57" height="16.61" viewBox="0 0 16 16"><path d="M2.500 1h8l3.500 3.500V15h-11.500z" fill="#dbe8f5" stroke="#7a98c4" stroke-width="1.200"/><path d="M10.500 1v3.500H14" fill="#f4f8fc" stroke="#6388bd" stroke-width=".8"/><path d="M4.500 4.500l5 5" stroke="#eaa050" stroke-width="2.400" stroke-linecap="round"/><circle cx="10" cy="10.500" r="2.200" fill="#dc6656"/><path d="M4.500 12.500h4" stroke="#7fa2d4" stroke-width="1.400"/></svg>
<div class="a t " style="left:1325.84px;top:90px;height:14px;line-height:14px;font-size:12px;letter-spacing:0.301px;transform:scaleY(1.06);transform-origin:0 11px;color:#111;">MapleServerHandler.java</div>
<svg class="a" style="left:1480.22px;top:91.85px;" width="8.04" height="7.78" viewBox="0 0 8 8"><rect x=".5" y=".5" width="7" height="7" fill="#d0d0d0" stroke="#6a6a6a"/><path d="M2 2l4 4M6 2L2 6" stroke="#222" stroke-width="1.500"/></svg>
<div class="a " style="left:364.02px;top:86.40px;width:1.04px;height:18.16px;background:#b2b2b2;"></div>
<div class="a " style="left:1846.83px;top:86.14px;width:15.57px;height:14.01px;background:linear-gradient(#fafafa,#dedede);border:1px solid #8c8c8c;border-radius:2.5px;border-radius:2.5px 0 0 2.5px;"></div>
<div class="a " style="left:1861.88px;top:86.14px;width:15.05px;height:14.01px;background:linear-gradient(#fafafa,#dedede);border:1px solid #8c8c8c;border-radius:2.5px;border-radius:0 2.5px 2.5px 0;"></div>
<div class="a " style="left:1880.04px;top:86.14px;width:15.57px;height:14.01px;background:linear-gradient(#fafafa,#dedede);border:1px solid #8c8c8c;border-radius:2.5px;"></div>
<div class="a " style="left:1899.24px;top:86.14px;width:16.61px;height:14.01px;background:linear-gradient(#fafafa,#dedede);border:1px solid #8c8c8c;border-radius:2.5px;"></div>
<svg class="a" style="left:1852.28px;top:90.29px;" width="4.41" height="5.71" viewBox="0 0 5 8"><path d="M5 0v8L0 4z" fill="#888"/></svg>
<svg class="a" style="left:1867.33px;top:90.29px;" width="4.41" height="5.71" viewBox="0 0 5 8"><path d="M0 0v8l5-4z" fill="#888"/></svg>
<svg class="a" style="left:1884.19px;top:90.81px;" width="7.26" height="4.67" viewBox="0 0 8 5"><path d="M0 0h8L4 5z" fill="#222"/></svg>
<svg class="a" style="left:1902.88px;top:89.25px;" width="9.34" height="8.30" viewBox="0 0 10 9"><rect x=".8" y=".8" width="8.4" height="7.4" fill="#fff" stroke="#333" stroke-width="1.4"/><rect x=".8" y=".8" width="8.4" height="2.6" fill="#333"/></svg>
<div class="a " style="left:363.76px;top:105.34px;width:1552.61px;height:26.98px;background:#f0f0f0;border-left:1px solid #a8acb6;border-right:1px solid #a8acb6;"></div>
<div class="a " style="left:366.36px;top:108.97px;width:55.52px;height:21.28px;background:linear-gradient(#ededed,#e2e2e2);border:2px solid #6b737e;border-radius:5px;box-shadow:inset 0 0 0 1px #fafafa;"></div>
<div class="a t " style="left:373.62px;top:114px;height:14px;line-height:14px;font-size:12.5px;letter-spacing:-0.029px;transform:scaleY(1.1);transform-origin:0 11px;color:#111;">Source</div>
<div class="a t " style="left:430.70px;top:114px;height:14px;line-height:14px;font-size:12.5px;letter-spacing:0.078px;transform:scaleY(1.1);transform-origin:0 11px;color:#111;">History</div>
<div class="a " style="left:478.96px;top:110.53px;width:1.04px;height:18.16px;background:#b4b4b4;"></div>
<div class="a " style="left:480.00px;top:110.53px;width:1.04px;height:18.16px;background:#fff;"></div>
<div class="a " style="left:576.52px;top:110.53px;width:1.04px;height:18.16px;background:#b4b4b4;"></div>
<div class="a " style="left:577.56px;top:110.53px;width:1.04px;height:18.16px;background:#fff;"></div>
<div class="a " style="left:698.98px;top:110.53px;width:1.04px;height:18.16px;background:#b4b4b4;"></div>
<div class="a " style="left:700.02px;top:110.53px;width:1.04px;height:18.16px;background:#fff;"></div>
<div class="a " style="left:772.67px;top:110.53px;width:1.04px;height:18.16px;background:#b4b4b4;"></div>
<div class="a " style="left:773.71px;top:110.53px;width:1.04px;height:18.16px;background:#fff;"></div>
<div class="a " style="left:824.56px;top:110.53px;width:1.04px;height:18.16px;background:#b4b4b4;"></div>
<div class="a " style="left:825.60px;top:110.53px;width:1.04px;height:18.16px;background:#fff;"></div>
<div class="a " style="left:876.45px;top:110.53px;width:1.04px;height:18.16px;background:#b4b4b4;"></div>
<div class="a " style="left:877.49px;top:110.53px;width:1.04px;height:18.16px;background:#fff;"></div>
<svg class="a" style="left:486.49px;top:110.79px;" width="18.16" height="18.16" viewBox="0 0 16 16"><rect x="1" y="3" width="13" height="11" fill="#eef1f6" stroke="#7a8698" stroke-width="1.2"/><path d="M5 9l4-5 5 4-4 5z" fill="#f0a040" stroke="#a86a18" stroke-width="1"/></svg>
<svg class="a" style="left:509.84px;top:110.79px;" width="18.16" height="18.16" viewBox="0 0 16 16"><rect x="1" y="2" width="12" height="12" fill="#eef1f6" stroke="#7a8698" stroke-width="1.2"/><circle cx="10.5" cy="11" r="4" fill="#f0a040" stroke="#a86a18" stroke-width="1"/><path d="M3 5h8M3 8h5" stroke="#9aa6b8"/></svg>
<svg class="a" style="left:533.45px;top:118.31px;" width="5.71" height="3.63" viewBox="0 0 8 5"><path d="M0 0h8L4 5z" fill="#222"/></svg>
<svg class="a" style="left:542.27px;top:110.79px;" width="18.16" height="18.16" viewBox="0 0 16 16"><rect x="1.5" y="2" width="13" height="12" fill="#c4c4c4" stroke="#9a9a9a" stroke-width="1.2"/><path d="M3 6h10M3 9h10" stroke="#b0a898" stroke-width="1.4"/></svg>
<svg class="a" style="left:564.58px;top:118.31px;" width="5.71" height="3.63" viewBox="0 0 8 5"><path d="M0 0h8L4 5z" fill="#222"/></svg>
<svg class="a" style="left:582.49px;top:110.79px;" width="18.16" height="18.16" viewBox="0 0 16 16"><rect x="0.500" y="1" width="8" height="4" fill="#f0a848" stroke="#a86a18" stroke-width=".8"/><circle cx="7.500" cy="7.500" r="4.200" fill="#e4f0ff" stroke="#1f3048" stroke-width="2"/><path d="M10.500 10.500l4.500 4.500" stroke="#1f3048" stroke-width="2.800"/></svg>
<svg class="a" style="left:605.84px;top:110.79px;" width="18.16" height="18.16" viewBox="0 0 16 16"><rect x="1" y="2" width="11" height="6" fill="#f0a848" stroke="#a86a18" stroke-width="1"/><path d="M5 9h9v3l-4.500 3.500L5 12z" fill="#5a9ad8" stroke="#1a4f90" stroke-width=".8"/></svg>
<svg class="a" style="left:629.19px;top:110.79px;" width="18.16" height="18.16" viewBox="0 0 16 16"><path d="M1 6l5-4v3h8v5H6v3z" fill="#5a9ad8" stroke="#1a4f90" stroke-width=".8"/><rect x="8" y="9" width="7" height="5" fill="#f0a848" stroke="#a86a18" stroke-width="1"/></svg>
<svg class="a" style="left:652.54px;top:110.79px;" width="18.16" height="18.16" viewBox="0 0 16 16"><rect x="1" y="2" width="11" height="6" fill="#f0a848" stroke="#a86a18" stroke-width="1"/><rect x="5" y="7" width="10" height="7" fill="#f4f4f4" stroke="#555" stroke-width="1.2"/></svg>
<svg class="a" style="left:675.89px;top:110.79px;" width="18.16" height="18.16" viewBox="0 0 16 16"><rect x="1" y="2" width="11" height="9" fill="#fbfbfb" stroke="#555" stroke-width="1.2"/><path d="M9 9l6 3.500-6 3.500z" fill="#2a5a9a"/></svg>
<svg class="a" style="left:704.43px;top:110.79px;" width="18.16" height="18.16" viewBox="0 0 16 16"><path d="M8 1l5 5h-3v3H6V6H3z" fill="#f0a040" stroke="#a86a18" stroke-width=".9"/><ellipse cx="9" cy="12" rx="5" ry="3" fill="#8ac0e8" stroke="#2a6aa8" stroke-width="1"/></svg>
<svg class="a" style="left:727.78px;top:110.79px;" width="18.16" height="18.16" viewBox="0 0 16 16"><path d="M8 10L3 5h3V1h4v4h3z" fill="#f0a040" stroke="#a86a18" stroke-width=".9"/><ellipse cx="9" cy="12.500" rx="5" ry="2.800" fill="#8ac0e8" stroke="#2a6aa8" stroke-width="1"/></svg>
<svg class="a" style="left:749.84px;top:110.79px;" width="18.16" height="18.16" viewBox="0 0 16 16"><ellipse cx="6" cy="5" rx="4.500" ry="3" fill="#b8d8f0" stroke="#4a88b8" stroke-width="1"/><ellipse cx="10" cy="11" rx="4.500" ry="3" fill="#c8d0d8" stroke="#7a8a9a" stroke-width="1"/></svg>
<svg class="a" style="left:779.68px;top:110.79px;" width="18.16" height="18.16" viewBox="0 0 16 16"><rect x="5" y="8" width="10" height="6" fill="#f4f6fa" stroke="#3a4a6a" stroke-width="1.2"/><path d="M1 6l5-4v2.500h7v3H6V10z" fill="#5a9ad8" stroke="#1a4f90" stroke-width=".8"/></svg>
<svg class="a" style="left:801.73px;top:110.79px;" width="18.16" height="18.16" viewBox="0 0 16 16"><rect x="5" y="8" width="10" height="6" fill="#f4f6fa" stroke="#3a4a6a" stroke-width="1.2"/><path d="M14 6L9 2v2.500H2v3h7V10z" fill="#5a9ad8" stroke="#1a4f90" stroke-width=".8"/></svg>
<svg class="a" style="left:830.53px;top:110.79px;" width="18.16" height="18.16" viewBox="0 0 16 16"><circle cx="8" cy="8" r="6" fill="#ee6262" stroke="#c84040" stroke-width="1.200"/><circle cx="6.500" cy="6" r="2" fill="#f6908a"/></svg>
<svg class="a" style="left:853.62px;top:110.79px;" width="18.16" height="18.16" viewBox="0 0 16 16"><rect x="2" y="2" width="12" height="12" fill="#c6c6c6" stroke="#9c9c9c" stroke-width="1.4"/><path d="M4 6h8M4 10h8" stroke="#dedede" stroke-width="1.4"/></svg>
<svg class="a" style="left:882.42px;top:110.79px;" width="18.16" height="18.16" viewBox="0 0 16 16"><rect x="2" y="6" width="12" height="9" fill="#8a9098" stroke="#4a5058" stroke-width="1.2"/><path d="M3 6l4-4 4 3 3-3v4z" fill="#4ab44a" stroke="#1e7a1e" stroke-width=".8"/></svg>
<svg class="a" style="left:905.77px;top:110.79px;" width="18.16" height="18.16" viewBox="0 0 16 16"><path d="M1 10h10V5h4v9H1z" fill="#222"/></svg>
<svg class="a" style="left:1901.84px;top:115.72px;" width="9.34" height="9.34" viewBox="0 0 9 9"><path d="M4.500 0v9M0 4.500h9M1.500 1.500l6 6M7.500 1.500l-6 6" stroke="#444" stroke-width="1.400"/></svg>
<div class="a " style="left:363.76px;top:132.32px;width:1552.61px;height:1.04px;background:#c3d3e6;"></div>
<div class="a" style="left:363.76px;top:132.84px;width:1552.61px;height:620.11px;overflow:hidden;background:#fff;"><div class="a" style="left:0.00px;top:0.00px;width:39.96px;height:620.11px;background:#e9e8e2;"></div><div class="a" style="left:0.00px;top:0.00px;width:1.30px;height:620.11px;background:#a8acb6;"></div><div class="a" style="left:39.96px;top:0.00px;width:0.78px;height:620.11px;background:#d6d6d0;"></div><div class="a" style="left:67.46px;top:347.26px;width:1455.05px;height:20px;background:#e9eff8;"></div><div class="a" style="left:627.63px;top:0.00px;width:1.04px;height:620.11px;background:#f3b0b0;"></div><div class="ln" style="left:4.67px;top:-7.84px;width:32.43px;">247</div><div class="ln" style="left:4.67px;top:13.16px;width:32.43px;">248</div><div class="cl" style="left:67.46px;top:13.16px;">    <span class="k">public</span> <span class="k">void</span> <span class="b">ApoDefenseUpdate</span>(<span class="k">int</span> state) {</div><div class="ln" style="left:4.67px;top:33.16px;width:32.43px;">249</div><div class="cl" style="left:67.46px;top:33.16px;">        <span class="f">player</span>.ApoDefenseUpdate(state);</div><div class="ln" style="left:4.67px;top:52.16px;width:32.43px;">250</div><div class="cl" style="left:67.46px;top:52.16px;">    }</div><div class="ln" style="left:4.67px;top:72.16px;width:32.43px;">251</div><div class="ln" style="left:4.67px;top:93.16px;width:32.43px;">252</div><div class="cl" style="left:67.46px;top:93.16px;">    <span class="k">public</span> <span class="k">int</span> <span class="b">whereHisMap</span>(String name) {</div><div class="ln" style="left:4.67px;top:111.16px;width:32.43px;">253</div><div class="cl" style="left:67.46px;top:111.16px;">        <span class="k">final</span> ChannelServer ch = ChannelServer.<span class="i">getInstance</span>(<span class="f">channel</span>);</div><div class="ln" style="left:4.67px;top:132.16px;width:32.43px;">254</div><div class="cl" style="left:67.46px;top:132.16px;">        <span class="k">return</span> ch.hisMap(name);</div><div class="ln" style="left:4.67px;top:153.16px;width:32.43px;">255</div><div class="cl" style="left:67.46px;top:153.16px;">    }</div><div class="ln" style="left:4.67px;top:174.16px;width:32.43px;">256</div><div class="ln" style="left:4.67px;top:192.16px;width:32.43px;">257</div><div class="cl" style="left:67.46px;top:192.16px;">    <span class="k">public</span> <span class="k">boolean</span> <span class="b">haveChannel</span>(String name) {</div><div class="ln" style="left:4.67px;top:212.16px;width:32.43px;">258</div><div class="cl" style="left:67.46px;top:212.16px;">        <span class="k">final</span> ChannelServer ch = ChannelServer.<span class="i">getInstance</span>(<span class="f">channel</span>);</div><div class="ln" style="left:4.67px;top:233.16px;width:32.43px;">259</div><div class="cl" style="left:67.46px;top:233.16px;">        <span class="k">return</span> ch.isMyChannelConnected(name);</div><div class="ln" style="left:4.67px;top:251.16px;width:32.43px;">260</div><div class="cl" style="left:67.46px;top:251.16px;">    }</div><div class="ln" style="left:4.67px;top:272.16px;width:32.43px;">261</div><div class="ln" style="left:4.67px;top:293.16px;width:32.43px;">262</div><div class="cl" style="left:67.46px;top:293.16px;">    <span class="k">public</span> <span class="k">void</span> <span class="b">killInfecter</span>(String name) <span class="hl">{</span></div><div class="ln" style="left:4.67px;top:314.16px;width:32.43px;">263</div><div class="cl" style="left:67.46px;top:314.16px;">        <span class="k">final</span> ChannelServer ch = ChannelServer.<span class="i">getInstance</span>(<span class="f">channel</span>);</div><div class="ln" style="left:4.67px;top:332.16px;width:32.43px;">264</div><div class="cl" style="left:67.46px;top:332.16px;">        ch.killInfecter(name);</div><div class="ln" style="left:4.67px;top:353.16px;width:32.43px;">265</div><div class="cl" style="left:67.46px;top:353.16px;">    <span class="hl">}</span></div><div class="ln" style="left:4.67px;top:373.16px;width:32.43px;">266</div><div class="ln" style="left:4.67px;top:391.16px;width:32.43px;">267</div><div class="cl" style="left:67.46px;top:391.16px;">    <span class="k">public</span> <span class="k">int</span> <span class="b">hisLevel</span>(String name) {</div><div class="ln" style="left:4.67px;top:412.16px;width:32.43px;">268</div><div class="cl" style="left:67.46px;top:412.16px;">        <span class="k">final</span> ChannelServer ch = ChannelServer.<span class="i">getInstance</span>(<span class="f">channel</span>);</div><div class="ln" style="left:4.67px;top:433.16px;width:32.43px;">269</div><div class="cl" style="left:67.46px;top:433.16px;">        <span class="k">return</span> ch.hisLevel(name);</div><div class="ln" style="left:4.67px;top:454.16px;width:32.43px;">270</div><div class="cl" style="left:67.46px;top:454.16px;">    }</div><div class="ln" style="left:4.67px;top:472.16px;width:32.43px;">271</div><div class="ln" style="left:4.67px;top:493.16px;width:32.43px;">272</div><div class="cl" style="left:67.46px;top:493.16px;">    <span class="k">public</span> <span class="k">int</span> <span class="b">hisApoState</span>(String name) {</div><div class="ln" style="left:4.67px;top:513.16px;width:32.43px;">273</div><div class="cl" style="left:67.46px;top:513.16px;">        <span class="k">final</span> ChannelServer ch = ChannelServer.<span class="i">getInstance</span>(<span class="f">channel</span>);</div><div class="ln" style="left:4.67px;top:532.16px;width:32.43px;">274</div><div class="cl" style="left:67.46px;top:532.16px;">        <span class="k">return</span> ch.hisApoState(name);</div><div class="ln" style="left:4.67px;top:552.16px;width:32.43px;">275</div><div class="cl" style="left:67.46px;top:552.16px;">    }</div><div class="ln" style="left:4.67px;top:573.16px;width:32.43px;">276</div><div class="ln" style="left:4.67px;top:591.16px;width:32.43px;">277</div><div class="cl" style="left:67.46px;top:591.16px;">    <span class="k">public</span> <span class="k">void</span> <span class="b">InfectiedDefense</span>(<span class="k">boolean</span> values) {</div><div class="ln" style="left:4.67px;top:612.16px;width:32.43px;">278</div><div class="cl" style="left:67.46px;top:612.16px;">        <span class="k">if</span> (values == <span class="k">true</span>) {</div><div class="ln" style="left:4.67px;top:633.16px;width:32.43px;">279</div><div class="a" style="left:96.46px;top:28.76px;width:1px;height:20px;background:#e4e4e4;"></div><div class="a" style="left:96.46px;top:108.76px;width:1px;height:40px;background:#e4e4e4;"></div><div class="a" style="left:96.46px;top:208.76px;width:1px;height:40px;background:#e4e4e4;"></div><div class="a" style="left:96.46px;top:308.76px;width:1px;height:40px;background:#e4e4e4;"></div><div class="a" style="left:96.46px;top:408.76px;width:1px;height:40px;background:#e4e4e4;"></div><div class="a" style="left:96.46px;top:508.76px;width:1px;height:40px;background:#e4e4e4;"></div><div class="a" style="left:96.46px;top:608.76px;width:1px;height:40px;background:#e4e4e4;"></div><div class="a" style="left:51.65px;top:18.76px;width:1px;height:48.00px;background:#858585;"></div><div class="a" style="left:51.65px;top:65.76px;width:5px;height:1px;background:#858585;"></div><svg class="a" style="left:46.65px;top:13.26px" width="11" height="11" viewBox="0 0 11 11"><rect x=".5" y=".5" width="10" height="10" rx="2" fill="#fff" stroke="#6f6f6f" stroke-width="1.100"/><path d="M2.500 5.500h6" stroke="#444"/></svg><div class="a" style="left:51.65px;top:98.76px;width:1px;height:68.00px;background:#858585;"></div><div class="a" style="left:51.65px;top:165.76px;width:5px;height:1px;background:#858585;"></div><svg class="a" style="left:46.65px;top:93.26px" width="11" height="11" viewBox="0 0 11 11"><rect x=".5" y=".5" width="10" height="10" rx="2" fill="#fff" stroke="#6f6f6f" stroke-width="1.100"/><path d="M2.500 5.500h6" stroke="#444"/></svg><div class="a" style="left:51.65px;top:198.76px;width:1px;height:68.00px;background:#858585;"></div><div class="a" style="left:51.65px;top:265.76px;width:5px;height:1px;background:#858585;"></div><svg class="a" style="left:46.65px;top:193.26px" width="11" height="11" viewBox="0 0 11 11"><rect x=".5" y=".5" width="10" height="10" rx="2" fill="#fff" stroke="#6f6f6f" stroke-width="1.100"/><path d="M2.500 5.500h6" stroke="#444"/></svg><div class="a" style="left:51.65px;top:298.76px;width:1px;height:68.00px;background:#858585;"></div><div class="a" style="left:51.65px;top:365.76px;width:5px;height:1px;background:#858585;"></div><svg class="a" style="left:46.65px;top:293.26px" width="11" height="11" viewBox="0 0 11 11"><rect x=".5" y=".5" width="10" height="10" rx="2" fill="#fff" stroke="#6f6f6f" stroke-width="1.100"/><path d="M2.500 5.500h6" stroke="#444"/></svg><div class="a" style="left:51.65px;top:398.76px;width:1px;height:68.00px;background:#858585;"></div><div class="a" style="left:51.65px;top:465.76px;width:5px;height:1px;background:#858585;"></div><svg class="a" style="left:46.65px;top:393.26px" width="11" height="11" viewBox="0 0 11 11"><rect x=".5" y=".5" width="10" height="10" rx="2" fill="#fff" stroke="#6f6f6f" stroke-width="1.100"/><path d="M2.500 5.500h6" stroke="#444"/></svg><div class="a" style="left:51.65px;top:498.76px;width:1px;height:68.00px;background:#858585;"></div><div class="a" style="left:51.65px;top:565.76px;width:5px;height:1px;background:#858585;"></div><svg class="a" style="left:46.65px;top:493.26px" width="11" height="11" viewBox="0 0 11 11"><rect x=".5" y=".5" width="10" height="10" rx="2" fill="#fff" stroke="#6f6f6f" stroke-width="1.100"/><path d="M2.500 5.500h6" stroke="#444"/></svg><div class="a" style="left:51.65px;top:598.76px;width:1px;height:268.00px;background:#858585;"></div><div class="a" style="left:51.65px;top:865.76px;width:5px;height:1px;background:#858585;"></div><svg class="a" style="left:46.65px;top:593.26px" width="11" height="11" viewBox="0 0 11 11"><rect x=".5" y=".5" width="10" height="10" rx="2" fill="#fff" stroke="#6f6f6f" stroke-width="1.100"/><path d="M2.500 5.500h6" stroke="#444"/></svg><div class="a" style="left:41.51px;top:300.76px;width:5px;height:64.00px;border:2px solid #4f7fbf;border-right:0;border-radius:3px 0 0 3px;"></div><div class="a" style="left:1522.51px;top:0.00px;width:16.61px;height:620.11px;background:#efefef;border-left:1px solid #e4e4e4;"></div><div class="a" style="left:1539.11px;top:0.00px;width:12.19px;height:620.11px;background:#fff;"></div><div class="a" style="left:1551.31px;top:0.00px;width:1.30px;height:620.11px;background:#a8acb6;"></div><div class="a" style="left:1523.29px;top:118.31px;width:15.31px;height:10.90px;background:linear-gradient(90deg,#f6f6f6,#dcdcdc);border:1px solid #9a9a9a;border-radius:2.5px;"></div><div class="a" style="left:1542.75px;top:127.14px;width:6.23px;height:3.63px;background:#5a5a5a;"></div><div class="a" style="left:1541.97px;top:9.08px;width:5.71px;height:5.71px;background:#52c452;border:1px solid #3aa83a;"></div></div>
<svg class="a" style="left:1892.24px;top:141.66px;" width="6.23" height="3.63" viewBox="0 0 8 5"><path d="M0 5h8L4 0z" fill="#555"/></svg>
<svg class="a" style="left:1892.24px;top:742.31px;" width="6.23" height="3.63" viewBox="0 0 8 5"><path d="M0 0h8L4 5z" fill="#555"/></svg>
<div class="a " style="left:363.76px;top:752.95px;width:1552.61px;height:19.20px;background:#f0f0f0;border:1px solid #a8acb6;border-top:1px solid #c8c8c8;"></div>
<svg class="a" style="left:371.55px;top:755.55px;" width="17.12" height="15.05" viewBox="0 0 16 15"><circle cx="8" cy="4.500" r="3.600" fill="#f0b040" stroke="#a87818" stroke-width=".9"/><circle cx="4.500" cy="10" r="3.800" fill="#6aa8e0" stroke="#2a68a8" stroke-width=".9"/><circle cx="11.500" cy="10" r="3.800" fill="#e86a5a" stroke="#a83a2a" stroke-width=".9"/></svg>
<div class="a t " style="left:393.86px;top:757px;height:14px;line-height:14px;font-size:12px;letter-spacing:0.359px;color:#111;">client.MapleClient</div>
<svg class="a" style="left:502.83px;top:756.58px;" width="7.26" height="12.97" viewBox="0 0 7 13"><path d="M1 1l5 5.500L1 12" fill="none" stroke="#333" stroke-width="1.600"/></svg>
<svg class="a" style="left:526.18px;top:757.62px;" width="12.45" height="11.42" viewBox="0 0 12 12"><circle cx="6" cy="6" r="4.600" fill="#f4d8d0" stroke="#d84a3a" stroke-width="2"/></svg>
<div class="a t " style="left:542.79px;top:757px;height:14px;line-height:14px;font-size:12px;letter-spacing:0.299px;color:#111;">killInfecter</div>
<svg class="a" style="left:606.62px;top:756.58px;" width="7.26" height="12.97" viewBox="0 0 7 13"><path d="M1 1l5 5.500L1 12" fill="none" stroke="#333" stroke-width="1.600"/></svg>
<svg class="a" style="left:1902.88px;top:758.66px;" width="8.30" height="7.78" viewBox="0 0 8 8"><rect x=".5" y=".5" width="7" height="7" fill="#777" stroke="#444"/><path d="M0 4h8M4 0v8" stroke="#ccc" stroke-width=".8"/></svg>
<div class="a " style="left:363.76px;top:777.34px;width:1552.61px;height:20.76px;background:linear-gradient(#f0f0f0 0,#e4e4e4 40%,#d2d2d2 75%,#c2c2c2 100%);border:1px solid #a9adb6;border-bottom:0;"></div>
<div class="a " style="left:363.76px;top:797.58px;width:1552.61px;height:217.69px;background:#fff;border:1px solid #a0a6b4;"></div>
<div class="a " style="left:364.80px;top:778.12px;width:105.86px;height:20.24px;background:linear-gradient(#ffffff,#f5f7fb 60%,#ffffff);border-right:1px solid #b4b8c2;"></div>
<div class="a " style="left:470.66px;top:778.12px;width:67.46px;height:19.46px;border-right:1px solid #c0c0c0;"></div>
<div class="a t " style="left:369.99px;top:781px;height:12px;line-height:12px;font-size:11.5px;font-weight:bold;letter-spacing:-0.114px;color:#111;-webkit-text-stroke:.1px #111;">Search Results</div>
<svg class="a" style="left:457.69px;top:784.09px;" width="8.30" height="7.78" viewBox="0 0 8 8"><rect x=".5" y=".5" width="7" height="7" fill="#d0d0d0" stroke="#6a6a6a"/><path d="M2 2l4 4M6 2L2 6" stroke="#222" stroke-width="1.500"/></svg>
<div class="a t " style="left:477.41px;top:781px;height:12px;line-height:12px;font-size:11.5px;font-weight:bold;letter-spacing:-0.141px;color:#111;-webkit-text-stroke:.1px #111;">Output</div>
<svg class="a" style="left:1901.32px;top:782.53px;" width="10.38" height="9.34" viewBox="0 0 10 9"><rect x=".7" y=".7" width="8.600" height="7.600" rx="1" fill="#f4f4f4" stroke="#555" stroke-width="1.200"/><rect x="2.200" y="4.600" width="5.600" height="2.600" fill="#333"/></svg>
<div class="a " style="left:0.00px;top:1015.26px;width:1920.00px;height:22.57px;background:#f0f0f0;"></div>
<svg class="a" style="left:1758.10px;top:1018.64px;" width="14.53" height="15.57" viewBox="0 0 14 15"><circle cx="6.500" cy="6.500" r="5.400" fill="#e4ecf6" stroke="#6a7a92" stroke-width="1.200"/><path d="M6.500 3v5" stroke="#223" stroke-width="1.800"/><path d="M8 11l1 3 1.500-4z" fill="#6a7a92"/></svg>
<div class="a " style="left:1775.74px;top:1019.16px;width:1.04px;height:15.57px;background:#b4b4b4;"></div>
<div class="a " style="left:1889.64px;top:1019.16px;width:1.04px;height:15.57px;background:#b4b4b4;"></div>
<div class="a t " style="left:1819.85px;top:1023px;height:12px;line-height:12px;font-size:11.5px;letter-spacing:0.269px;color:#222;">265:6</div>
<div class="a t " style="left:1894.05px;top:1023px;height:12px;line-height:12px;font-size:11.5px;letter-spacing:0.701px;color:#222;">INS</div>
</div></body></html>
